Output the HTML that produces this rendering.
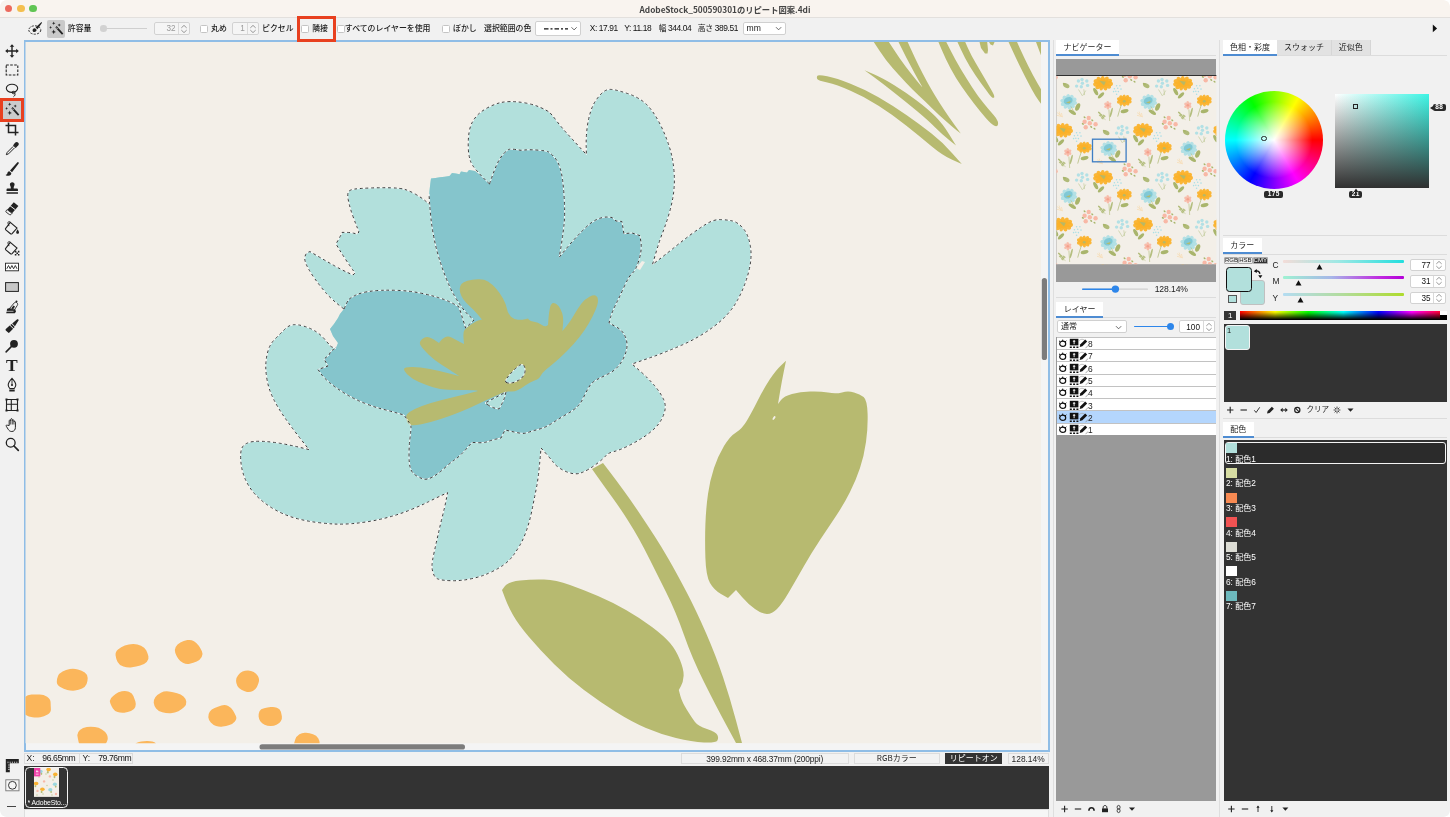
<!DOCTYPE html><html lang="ja"><head><meta charset="utf-8"><title>AdobeStock_500590301のリピート図案.4di</title><style>
*{box-sizing:border-box}
html,body{margin:0;padding:0}
body{width:1450px;height:817px;overflow:hidden;background:#f1f1f1;font-family:"Liberation Sans","Noto Sans CJK JP",sans-serif;font-size:9px;color:#222;position:relative;line-height:1}
.a{position:absolute}
.t{position:absolute;white-space:nowrap;line-height:12px;height:12px}
.jp{font-family:"Noto Sans CJK JP","Liberation Sans",sans-serif}
.box{position:absolute;background:#fff;border:1px solid #d0d0d0;border-radius:2px}
.dbox{position:absolute;background:#f4f4f4;border:1px solid #d4d4d4;border-radius:2px}
.cb{position:absolute;width:8px;height:8px;background:#fff;border:1px solid #c4c4c4;border-radius:1.5px}
.sb{position:absolute;background:#f2f2f2;border:1px solid #dcdcdc;text-align:center;line-height:10px;height:11px;white-space:nowrap}
.tab{position:absolute;background:#fff;border-bottom:2px solid #4e8cd2;text-align:center;white-space:nowrap}
.tabi{position:absolute;background:#e2e2e2;text-align:center;white-space:nowrap;border-right:1px solid #d6d6d6}
.hl{position:absolute;height:1px;background:#dcdcdc}
.lay{position:absolute;left:1056.7px;width:159.6px;height:12.4px;background:#fff;border:1px solid #c2c2c2;border-width:1px 0 0 0}
.pi{position:absolute;left:1226px;width:10.5px;height:10px}
.pl{position:absolute;left:1226px;color:#fff;white-space:nowrap;line-height:11px}
</style></head><body><div id="root" style="position:absolute;left:0;top:0;width:1450px;height:817px;will-change:transform">
<div class="a" style="left:0;top:0;width:1450px;height:17.700px;background:#f9f4ef;border-bottom:1px solid #e3e0dd;border-radius:5px 5px 0 0"></div>
<div class="a" style="left:4.699999999999999px;top:4.7px;width:7.8px;height:7.8px;border-radius:50%;background:#ec6a5e"></div>
<div class="a" style="left:17.1px;top:4.7px;width:7.8px;height:7.8px;border-radius:50%;background:#f4bf4f"></div>
<div class="a" style="left:29.200000000000003px;top:4.7px;width:7.8px;height:7.8px;border-radius:50%;background:#61c554"></div>
<div class="t jp" style="left:525px;width:400px;top:2.5px;text-align:center;font-weight:bold;font-size:8.3px;color:#444">AdobeStock_500590301のリピート図案.4di</div>
<div class="a" style="left:23.5px;top:39.700px;width:1026.3px;height:712.700px;background:#f4f4f4;border:2px solid #8fbde6"></div>
<svg class="a" style="left:0;top:0" width="1450" height="817" viewBox="0 0 1450 817">
<defs><clipPath id="cv"><rect x="25.5" y="42" width="1015.5" height="701.3"/></clipPath></defs>
<g clip-path="url(#cv)"><rect x="25" y="41" width="1017" height="703" fill="#f3efe8"/>
<path d="M817.2 79Q816.5 77.5 817.2 76Q817.9 74.5 827.2 76.3Q836.6 78.2 850.5 83.8Q864.5 89.3 878.5 97.2Q892.4 105.2 906.4 115Q920.4 124.7 931.5 133.6Q942.7 142.4 952.2 153.2L961.8 164L952.2 159.8Q942.7 155.5 931.5 146.2Q920.4 136.8 906.4 125.7Q892.4 114.5 878.5 105.7Q864.5 96.8 850.5 90.8Q836.6 84.7 827.3 82.6Q818 80.5 817.2 79Z" fill="#b7ba70"/>
<path d="M873.8 77L864.5 70.2L873.8 74.2Q883.1 78.2 894.3 85.2Q905.5 92.1 916.6 100.5Q927.8 108.9 935.2 116.3Q942.7 123.8 949.4 134.7L956 145.5L949.4 140.2Q942.7 135 935.2 127.5Q927.8 120.1 916.6 110.8Q905.5 101.5 894.3 92.7Q883.1 83.8 873.8 77Z" fill="#b7ba70"/>
<path d="M880.7 41L873.1 41L879.7 51Q886.2 61 892.8 68.2Q899.3 75.4 905.8 82.6Q912.4 89.8 919 95.7Q925.5 101.6 932 108.2Q938.6 114.7 945.2 120.6Q951.7 126.5 956.2 130L960.8 133.5L955 125.4Q949.1 117.3 943.9 109.4Q938.6 101.6 934.7 95Q930.8 88.5 926.8 81.2Q922.9 74 919 66.2Q915 58.3 911.1 49.6L907.2 41L902.6 41L898 41L902 49Q905.9 57 910.5 65.5Q915 74 918.6 80.5L922.3 87L922 86.8L921.6 86.5L917 81Q912.4 75.4 905.8 66.8Q899.3 58.3 893.8 49.6L888.2 41L880.7 41Z" fill="#b7ba70"/>
<path d="M941.9 41L938 41L941.6 49.6Q945.2 58.3 950.5 68.2Q955.7 78 961.6 86.5Q967.5 95 974 103.5Q980.6 112 985.8 118Q991 123.9 993.6 125.3Q996.3 126.8 997.4 125.7Q998.5 124.5 997.8 121.5Q997 118.6 993.4 114.7Q989.7 110.8 983.9 103.6Q978 96.4 972.1 87.2Q966.2 78 960.3 68.2Q954.4 58.3 950.1 49.6L945.8 41L941.9 41Z" fill="#b7ba70"/>
<path d="M960.9 41L957 41L960.9 49.6Q964.8 58.3 970 66.8Q975.3 75.4 980.5 82.6Q985.8 89.8 989.1 94.2Q992.4 98.5 993.8 97.7Q995.2 96.8 992.5 92Q989.7 87.2 985.2 79.3Q980.6 71.5 976 63.6Q971.4 55.7 968.1 48.4L964.8 41L960.9 41Z" fill="#b7ba70"/>
<path d="M979.3 41 L987.1 41 L988 50 L987.5 53.5 L985 53.5 L981 48Z" fill="#b7ba70"/>
<path d="M988.4 41 L995 41 L993 45.5 L990.5 44.5Z" fill="#b7ba70"/>
<path d="M1012.4 41L1008.1 41L1012.7 51Q1017.3 61 1022.5 71.5Q1027.8 82 1031.7 89.2Q1035.6 96.4 1038.8 100.7L1042 105L1042 98L1042 91L1037.5 83.2Q1033 75.4 1028.4 66.2Q1023.8 57 1020.2 49L1016.6 41L1012.4 41Z" fill="#b7ba70"/>
<path d="M1035.6 41 L1042 41 L1042 58Z" fill="#b7ba70"/>
<path d="M485.8 180.2L489.5 184L481.2 176Q473 168 470.8 162Q468.6 156 468.3 148Q468 140 469 133Q470 126 473 121Q476 116 480 112.8Q484 109.5 489 107Q494 104.5 499 103Q504 101.6 511 101.6Q518 101.6 526 103.1Q534 104.6 540.5 107.5Q547 110.5 549 112Q551 113.5 556.5 120.8Q562 128 568 134.5Q574 141 580.2 147.8L586.4 154.5L586.2 146.2Q586 138 587 129Q588 120 590.5 112Q593 104 597 98.8Q601 93.5 604 91.4Q607 89.3 610.5 89.4Q614 89.6 617.5 90.5Q621 91.4 627.5 93.5Q634 95.6 640 99.3Q646 103 651 109.5Q656 116 660 124Q664 132 667 140Q670 148 671.8 156Q673.6 164 674.2 174Q674.8 184 673.4 194Q672 204 669 214Q666 224 662.5 233Q659 242 655.8 253.2L652.5 264.5L658.4 260Q664.3 255.5 672.6 248.8Q681 242 689.8 235.3Q698.6 228.7 706.3 224Q714 219.3 720.5 219.6Q727 219.8 732.2 220.9Q737.5 222 743 228.2Q748.5 234.5 750.4 246.2Q752.3 257.9 748.6 272Q745 286.2 737.4 300.3Q729.7 314.4 715.2 325.5Q700.6 336.7 682.5 344.8Q664.3 352.8 648.1 358.4L632 364L640 371Q648 378 654 385Q660 392 663.4 399Q666.8 406 663.9 414Q661 422 655.5 427.5Q650 433 643 437.5Q636 442 628 446Q620 450 614 451.5Q608 453 606 455.5Q604 458 599 462Q594 466 589 469Q584 472 580 473.2Q576 474.4 571 473.2Q566 472 561 469Q556 466 553 462Q550 458 545.5 453L541 448L540.5 454Q540 460 539 470Q538 480 536 490Q534 500 532 510Q530 520 527 529Q524 538 520 545Q516 552 512 557Q508 562 502 566Q496 570 488 573.5Q480 577 470 579Q460 581 451 580.7Q442 580.4 438.5 579.2Q435 578 433.5 574Q432 570 432 566Q432 562 434 553Q436 544 438 535Q440 526 442.5 516Q445 506 446.3 499.3L447.6 492.6L441.8 495.3Q436 498 428 502Q420 506 410 510Q400 514 390 516.8Q380 519.6 370 521.3Q360 523 351 523.7Q342 524.4 334 524Q326 523.6 316 522.3Q306 521 296 518.3Q286 515.6 277 510.8Q268 506 261 500Q254 494 249.5 487Q245 480 243 473Q241 466 240.7 459Q240.4 452 241.7 448.5Q243 445 247.5 443Q252 441 261 441.3Q270 441.6 280 443.3Q290 445 299.5 447.3L309 449.6L300.5 438.8Q292 428 285 418Q278 408 273.5 399Q269 390 267.3 381Q265.6 372 265.8 365Q266 358 268 351Q270 344 275 339Q280 334 284.5 329.5Q289 325 293.5 324.7Q298 324.4 304 326.2Q310 328 315 331Q320 334 324 338.5Q328 343 329.5 345Q331 347 333.5 347.5L336 348L337 345.5L338 343L335.5 339.5L333 336L331.5 332.5L330 329L332 326.5L334 324L336 321L338 318L339 316L340 314L342 311.5L344 309L338 304.5Q332 300 326 293Q320 286 315 279Q310 272 307 266Q304 260 305 256.5Q306 253 308 252.3L310 251.6L318 256.3Q326 261 334 265.5Q342 270 347.5 272.5L353 275L354 274L355 273L352.5 269.5Q350 266 346 260Q342 254 339 249L336 244L338.5 239.5Q341 235 341.5 233.7L342 232.4L346 232.4Q350 232.4 353.5 233.2L357 234L358 233L359 232L357 227Q355 222 352.5 215Q350 208 348.5 201Q347 194 348.5 191.8Q350 189.6 355 189Q360 188.4 370 188Q380 187.6 390 187.8Q400 188 405 189.5Q410 191 416 194.5Q422 198 425.5 201L429 204L429 199L429 194L430 186.2L431 178.5L435.5 177.9L440 177.3L444.8 176.7L449.5 176L450.8 174.5L452 173L455.8 173.6L459.5 174.2L460.2 172.9L461 171.6L464 172.1L467 172.6L468 171.3L469 170L472 170.5L475 171L478.5 173.8L482 176.5L485.8 180.2Z" fill="#b2e0dc"/>
<path d="M430 186.2L431 178.5L435.5 177.9L440 177.3L444.8 176.7L449.5 176L450.8 174.5L452 173L455.8 173.6L459.5 174.2L460.2 172.9L461 171.6L464 172.1L467 172.6L468 171.3L469 170L472 170.5L475 171L478.5 173.8L482 176.5L485.8 180.2L489.5 184L492.1 176.5Q494.6 169 497.6 162.9Q500.7 156.9 503.9 153.4Q507 150 509 149.4Q511 148.8 516 149.6L521 150.3L526 149.9Q531 149.5 538.5 150.2Q546 150.8 548 151.7Q550 152.5 554 156.8Q558 161 560.4 169.1Q562.8 177.1 564 195.3Q565.3 213.5 563.9 225.6Q562.5 237.7 560.9 247.4L559.3 257.1L567.3 247.4Q575.4 237.7 583.5 229.6Q591.6 221.5 597.7 219.1Q603.7 216.7 607.9 217.1L612 217.5L614 219.2L616 221L619 221.2L621.9 221.5L622.9 227.6L623.9 233.7L628 233.3L632 233L636 234.3L640 235.7L641 242.8Q642 249.8 639 259.9Q636 270 632.5 273Q629 276 624.5 286Q620 296 616 304Q612 312 610.5 317.5L609 323L615.5 326.5Q622 330 624.5 335Q627 340 627 345Q627 350 624.5 356Q622 362 618 366.5Q614 371 608 374Q602 377 597 379.5Q592 382 589 387Q586 392 583.5 397.5Q581 403 577.5 406.5Q574 410 567 414Q560 418 554 422Q548 426 544 427.5Q540 429 536 430Q532 431 528 432.5Q524 434 519 433Q514 432 509.5 431L505 430L503 434L501 438L496.5 439Q492 440 488 441.5Q484 443 478 442.7L472 442.4L466 449.2Q460 456 455 459.5Q450 463 444 468.5Q438 474 432.5 477Q427 480 423.5 479Q420 478 416 475.5Q412 473 410.5 468.5Q409 464 409 455Q409 446 410 438Q411 430 411 427.5Q411 425 407.5 420L404 415L397 413Q390 411 382 409Q374 407 364 403Q354 399 345 393.5Q336 388 330 383Q324 378 321 373.8L318 369.6L323 367.8L328 366L326 362.5L324 359L326.5 357L329 355L330 353L331 351L333.5 349.5L336 348L337 345.5L338 343L335.5 339.5L333 336L331.5 332.5L330 329L332 326.5L334 324L336 321L338 318L339 316L340 314L342 311.5L344 309L345.5 305.5Q347 302 348.5 300Q350 298 355 295.5Q360 293 367 291.8Q374 290.6 382 290.3Q390 290 400 290.5Q410 291 420 293Q430 295 438 297.5Q446 300 451 302.5Q456 305 457.5 306L459 307L462.3 317.5L465.6 328L469.8 324L474 320L470 316.5Q466 313 462 307.5Q458 302 454 295Q450 288 446 278Q442 268 439 258Q436 248 434 238Q432 228 431 219Q430 210 429.5 202Q429 194 430 186.2Z" fill="#85c5cc"/>
<path d="M636 268 L642 261 L645 262 L640 270Z" fill="#f3efe8"/>
<path d="M459.8 288Q460 286 461.5 284Q463 282 467.5 280.8Q472 279.6 478 279.3Q484 279 488 281.5Q492 284 496 288.5Q500 293 503 298.5Q506 304 507 309Q508 314 511 316.8Q514 319.6 518 319.8Q522 320 525 319.2L528 318.4L529 319.7Q530 321 534 321.7Q538 322.4 541.5 324.7Q545 327 546.5 326L548 325L548.5 318.5Q549 312 550 307.5Q551 303 553.5 303Q556 303 558.5 306Q561 309 562.3 313.5Q563.6 318 563 324.5L562.4 331L566.2 326.5Q570 322 574 315Q578 308 581.5 303.5Q585 299 589.5 296.7Q594 294.4 596 295.7Q598 297 598 300.5Q598 304 595.5 310Q593 316 589 323Q585 330 579.5 337Q574 344 567 351Q560 358 554 363Q548 368 545 370.5Q542 373 540.5 376Q539 379 534.5 380.5Q530 382 526 385Q522 388 518 390Q514 392 510 391.5Q506 391 502 393Q498 395 491 398Q484 401 477 404.5Q470 408 460 412Q450 416 440 419.2Q430 422.4 421.5 424.2Q413 426 410.5 425Q408 424 406.5 419.5Q405 415 409.5 412Q414 409 422 406Q430 403 440 400.5Q450 398 458 396Q466 394 472 392.5L478 391L476.5 390.5Q475 390 465.5 390Q456 390 448 389.8Q440 389.6 433 387.3Q426 385 419 382Q412 379 408 375Q404 371 404 369Q404 367 412 367Q420 367 430 369Q440 371 449.5 373.5L459 376L454.5 373Q450 370 442 365Q434 360 428.5 354.5Q423 349 420.7 345.5Q418.4 342 422.2 339Q426 336 429.5 337.5L433 339L436 341L439 343L440.5 341Q442 339 445 337.3Q448 335.6 452 337.8Q456 340 460 342L464 344L463.5 338Q463 332 464.5 330Q466 328 471 324.5Q476 321 479 320.3L482 319.6L478 314.8Q474 310 470 306.5Q466 303 463.5 299.5Q461 296 460.3 293Q459.6 290 459.8 288Z" fill="#b7ba70"/>
<path d="M507 382.8Q504 382 507 378Q510 374 514 370Q518 366 520.5 364.8Q523 363.6 524.3 366.3Q525.6 369 524.8 372.5Q524 376 521 378.5Q518 381 514 382.3Q510 383.6 507 382.8Z" fill="#b2e0dc"/>
<path d="M488.5 405.3L485 403L495.5 397.5L506 392L505 396Q504 400 501.5 404.5L499 409L495.5 408.3Q492 407.6 488.5 405.3Z" fill="#b2e0dc"/>
<path d="M598 477.5L592 469L597.5 466L603 463L609.5 471.5Q616 480 624 491Q632 502 640 514Q648 526 654.5 536Q661 546 668.5 559Q676 572 686 591Q696 610 706 633Q716 656 723 677Q730 698 736 720.5L742 743L739 743L736 743L726 724.5Q716 706 704 682Q692 658 684 635Q676 612 666 592Q656 572 650 560Q644 548 639 539Q634 530 627 519Q620 508 612 497Q604 486 598 477.5Z" fill="#b7ba70"/>
<path d="M781 365.4L786 360.8L784 370.4Q782 380 780 392L778 404L781 400Q784 396 792 394Q800 392 810 391.6Q820 391.2 828 392.6Q836 394 842 392.4Q848 390.8 854 392.4Q860 394 863.6 397Q867.2 400 867.6 414Q868 428 866 442Q864 456 860 468Q856 480 850 492Q844 504 836 516Q828 528 820 540Q812 552 804 566Q796 580 789 592Q782 604 777 609Q772 614 767 614Q762 614 755 609Q748 604 742 597L736 590L732 594L728 598L721 594Q714 590 710 583Q706 576 705.4 558Q704.8 540 705.4 524Q706 508 708 494Q710 480 714 468Q718 456 724 446Q730 436 736 432.4Q742 428.8 747 420.4Q752 412 758 400Q764 388 770 379Q776 370 781 365.4Z" fill="#b7ba70"/>
<path d="M505 598L502 590L505 586Q508 582 520 580.6Q532 579.2 544 579.6Q556 580 570 585Q584 590 598 596Q612 602 626 610Q640 618 652 627Q664 636 670 643Q676 650 680 660Q684 670 683.6 676Q683.2 682 681 686L678.8 690L680.4 696Q682 702 687 710Q692 718 695 722Q698 726 707 729Q716 732 717.4 735Q718.8 738 717.4 740.4Q716 742.8 704 742.4Q692 742 676 738Q660 734 646 728Q632 722 616 712Q600 702 584 690Q568 678 554 664Q540 650 529 637Q518 624 513 615Q508 606 505 598Z" fill="#b7ba70"/>
<ellipse cx="774" cy="418" rx="1" ry="2.2" transform="rotate(35 774 418)" fill="#f3efe8"/>
<path d="M146.2 650.3Q147.6 653.1 148.4 656.2Q149.2 659.3 146.7 662Q144.1 664.6 140.2 665.6Q136.2 666.7 132 667.3Q127.7 667.9 123.4 666.5Q119.2 665.1 117.6 661.9Q116 658.7 115.6 655.4Q115.1 652.1 118 649.5Q121 646.9 124.8 645.5Q128.7 644.2 133 644Q137.4 643.9 141 645.7Q144.7 647.4 146.2 650.3Z" fill="#fbb65b"/>
<path d="M198.8 645.7Q200.5 648.2 201.9 651.2Q203.4 654.1 201.7 657.1Q200 660.1 196.7 661.6Q193.4 663.1 189.7 663.8Q186.1 664.5 182.9 662.7Q179.8 661 178.1 658.4Q176.4 655.9 175.3 652.9Q174.2 650 175.7 647Q177.1 644 180.4 642.4Q183.6 640.9 187.3 640.1Q191 639.4 194 641.3Q197 643.2 198.8 645.7Z" fill="#fbb65b"/>
<path d="M87.7 678Q87.7 681.1 86.6 684Q85.5 686.8 82.1 688.5Q78.8 690.2 74.9 690.6Q71 690.9 67.3 690Q63.6 689 60.3 687.1Q56.9 685.2 56.8 682Q56.7 678.9 58 676Q59.2 673.1 62.6 671.4Q65.9 669.6 69.9 669Q73.9 668.4 77.9 669.4Q81.8 670.3 84.8 672.6Q87.8 674.9 87.7 678Z" fill="#fbb65b"/>
<path d="M258.9 681.5Q258.3 684.4 256.9 687Q255.5 689.6 252.8 691.1Q250 692.6 247 691.9Q244 691.2 241.4 689.8Q238.9 688.4 237.4 685.9Q235.9 683.3 236.1 680.4Q236.2 677.5 238.1 675.2Q239.9 672.9 242.5 671.6Q245.1 670.3 248.1 670.4Q251.1 670.5 253.7 672Q256.3 673.5 257.9 676Q259.5 678.6 258.9 681.5Z" fill="#fbb65b"/>
<path d="M50.6 702.3Q50.7 705.7 50.9 709.1Q51.1 712.6 47.6 714.5Q44 716.5 40.2 717.2Q36.4 717.8 32.5 717.3Q28.7 716.8 25.4 714.8Q22.1 712.8 21.8 709.6Q21.5 706.3 21.8 703.1Q22.2 700 24.8 697.3Q27.3 694.7 31.5 694.5Q35.6 694.3 39.7 694.5Q43.7 694.6 47.1 696.8Q50.5 698.9 50.6 702.3Z" fill="#fbb65b"/>
<path d="M133.4 695.9Q134.5 698.8 135.4 701.4Q136.3 704 135.3 706.9Q134.2 709.7 131 711.1Q127.7 712.4 124.3 712.7Q120.8 713.1 117.6 712Q114.4 710.9 112.9 708.4Q111.3 705.9 110.3 703.2Q109.3 700.5 111.1 698Q112.9 695.6 115.6 693.9Q118.2 692.1 121.8 691.3Q125.4 690.5 128.9 691.7Q132.4 693 133.4 695.9Z" fill="#fbb65b"/>
<path d="M186.3 701.8Q186.6 704.7 184.2 707.1Q181.8 709.5 178.4 711.2Q175.1 712.9 170.7 713.2Q166.4 713.4 162.3 712.3Q158.1 711.1 156.1 708.4Q154 705.8 153.7 702.8Q153.5 699.9 155.3 697.2Q157.2 694.5 160.9 692.7Q164.5 690.9 168.9 691.5Q173.3 692.1 177.1 693.2Q180.9 694.2 183.5 696.5Q186.1 698.8 186.3 701.8Z" fill="#fbb65b"/>
<path d="M233 710.4Q234.6 713 235.9 716Q237.2 718.9 234.9 721.4Q232.7 724 229.4 725Q226.1 726.1 222.7 726.6Q219.4 727.2 216.1 726Q212.9 724.9 210.8 722.5Q208.6 720.2 208.3 717.2Q208 714.3 209.7 711.7Q211.4 709.1 214.6 707.9Q217.8 706.8 221.4 705.6Q225 704.3 228.2 706.1Q231.5 707.8 233 710.4Z" fill="#fbb65b"/>
<path d="M280.8 711.5Q281.5 714.1 281.9 716.6Q282.3 719 280.8 721.2Q279.3 723.5 276.5 724.8Q273.8 726.1 270.5 726Q267.3 726 264.6 724.7Q261.9 723.4 260.3 721.2Q258.8 719 258.6 716.5Q258.4 713.9 259.5 711.3Q260.6 708.7 264.1 708.2Q267.5 707.7 270.7 707.1Q273.8 706.5 276.9 707.7Q280 708.9 280.8 711.5Z" fill="#fbb65b"/>
<path d="M106.6 734.1Q108.3 737 107.5 740.1Q106.8 743.2 103.9 745.5Q101.1 747.8 97.3 748.5Q93.5 749.3 89.7 748.9Q85.9 748.4 82.6 746.7Q79.3 744.9 78.6 741.9Q77.9 738.9 77.4 735.7Q77 732.5 79.9 729.9Q82.7 727.4 86.9 727Q91.1 726.5 94.9 727.1Q98.7 727.6 101.9 729.4Q105 731.2 106.6 734.1Z" fill="#fbb65b"/>
<path d="M155.5 743Q156.1 744.1 156.4 745.1Q156.7 746.2 155.6 747.2Q154.5 748.3 151.6 748.5Q148.7 748.7 146 748.7Q143.4 748.8 140.6 748.5Q137.8 748.1 137 747Q136.2 745.9 135.6 744.8Q135 743.7 136.9 742.8Q138.8 741.9 141.3 741.4Q143.9 740.9 146.8 740.9Q149.7 740.8 152.3 741.4Q154.9 742 155.5 743Z" fill="#fbb65b"/>
<path d="M319.6 744.4Q319.3 747.6 317.8 750.4Q316.3 753.2 313.5 754.9Q310.7 756.7 307.2 757Q303.7 757.3 300.3 756.1Q296.8 754.9 294.8 752Q292.7 749 293.5 745.7Q294.4 742.4 295.3 739.3Q296.3 736.2 299.4 734.2Q302.4 732.3 306 732.7Q309.6 733.1 313 734.2Q316.5 735.2 318.2 738.2Q320 741.2 319.6 744.4Z" fill="#fbb65b"/>
<path d="M489.5 184Q473 168 470.8 162Q468.6 156 468.3 148Q468 140 469 133Q470 126 473 121Q476 116 480 112.8Q484 109.5 489 107Q494 104.5 499 103Q504 101.6 511 101.6Q518 101.6 526 103.1Q534 104.6 540.5 107.5Q547 110.5 549 112Q551 113.5 556.5 120.8Q562 128 568 134.5Q574 141 580.2 147.8L586.4 154.5L586.2 146.2Q586 138 587 129Q588 120 590.5 112Q593 104 597 98.8Q601 93.5 604 91.4Q607 89.3 610.5 89.4Q614 89.6 617.5 90.5Q621 91.4 627.5 93.5Q634 95.6 640 99.3Q646 103 651 109.5Q656 116 660 124Q664 132 667 140Q670 148 671.8 156Q673.6 164 674.2 174Q674.8 184 673.4 194Q672 204 669 214Q666 224 662.5 233Q659 242 655.8 253.2L652.5 264.5L658.4 260Q664.3 255.5 672.6 248.8Q681 242 689.8 235.3Q698.6 228.7 706.3 224Q714 219.3 720.5 219.6Q727 219.8 732.2 220.9Q737.5 222 743 228.2Q748.5 234.5 750.4 246.2Q752.3 257.9 748.6 272Q745 286.2 737.4 300.3Q729.7 314.4 715.2 325.5Q700.6 336.7 682.5 344.8Q664.3 352.8 648.1 358.4L632 364L640 371Q648 378 654 385Q660 392 663.4 399Q666.8 406 663.9 414Q661 422 655.5 427.5Q650 433 643 437.5Q636 442 628 446Q620 450 614 451.5Q608 453 606 455.5Q604 458 599 462Q594 466 589 469Q584 472 580 473.2Q576 474.4 571 473.2Q566 472 561 469Q556 466 553 462Q550 458 545.5 453L541 448L540.5 454Q540 460 539 470Q538 480 536 490Q534 500 532 510Q530 520 527 529Q524 538 520 545Q516 552 512 557Q508 562 502 566Q496 570 488 573.5Q480 577 470 579Q460 581 451 580.7Q442 580.4 438.5 579.2Q435 578 433.5 574Q432 570 432 566Q432 562 434 553Q436 544 438 535Q440 526 442.5 516Q445 506 446.3 499.3L447.6 492.6L441.8 495.3Q436 498 428 502Q420 506 410 510Q400 514 390 516.8Q380 519.6 370 521.3Q360 523 351 523.7Q342 524.4 334 524Q326 523.6 316 522.3Q306 521 296 518.3Q286 515.6 277 510.8Q268 506 261 500Q254 494 249.5 487Q245 480 243 473Q241 466 240.7 459Q240.4 452 241.7 448.5Q243 445 247.5 443Q252 441 261 441.3Q270 441.6 280 443.3Q290 445 299.5 447.3L309 449.6L300.5 438.8Q292 428 285 418Q278 408 273.5 399Q269 390 267.3 381Q265.6 372 265.8 365Q266 358 268 351Q270 344 275 339Q280 334 284.5 329.5Q289 325 293.5 324.7Q298 324.4 304 326.2Q310 328 315 331Q320 334 324 338.5Q328 343 329.5 345Q331 347 333.5 347.5L336 348" fill="none" stroke="#fff" stroke-width="1" opacity=".85"/>
<path d="M489.5 184Q473 168 470.8 162Q468.6 156 468.3 148Q468 140 469 133Q470 126 473 121Q476 116 480 112.8Q484 109.5 489 107Q494 104.5 499 103Q504 101.6 511 101.6Q518 101.6 526 103.1Q534 104.6 540.5 107.5Q547 110.5 549 112Q551 113.5 556.5 120.8Q562 128 568 134.5Q574 141 580.2 147.8L586.4 154.5L586.2 146.2Q586 138 587 129Q588 120 590.5 112Q593 104 597 98.8Q601 93.5 604 91.4Q607 89.3 610.5 89.4Q614 89.6 617.5 90.5Q621 91.4 627.5 93.5Q634 95.6 640 99.3Q646 103 651 109.5Q656 116 660 124Q664 132 667 140Q670 148 671.8 156Q673.6 164 674.2 174Q674.8 184 673.4 194Q672 204 669 214Q666 224 662.5 233Q659 242 655.8 253.2L652.5 264.5L658.4 260Q664.3 255.5 672.6 248.8Q681 242 689.8 235.3Q698.6 228.7 706.3 224Q714 219.3 720.5 219.6Q727 219.8 732.2 220.9Q737.5 222 743 228.2Q748.5 234.5 750.4 246.2Q752.3 257.9 748.6 272Q745 286.2 737.4 300.3Q729.7 314.4 715.2 325.5Q700.6 336.7 682.5 344.8Q664.3 352.8 648.1 358.4L632 364L640 371Q648 378 654 385Q660 392 663.4 399Q666.8 406 663.9 414Q661 422 655.5 427.5Q650 433 643 437.5Q636 442 628 446Q620 450 614 451.5Q608 453 606 455.5Q604 458 599 462Q594 466 589 469Q584 472 580 473.2Q576 474.4 571 473.2Q566 472 561 469Q556 466 553 462Q550 458 545.5 453L541 448L540.5 454Q540 460 539 470Q538 480 536 490Q534 500 532 510Q530 520 527 529Q524 538 520 545Q516 552 512 557Q508 562 502 566Q496 570 488 573.5Q480 577 470 579Q460 581 451 580.7Q442 580.4 438.5 579.2Q435 578 433.5 574Q432 570 432 566Q432 562 434 553Q436 544 438 535Q440 526 442.5 516Q445 506 446.3 499.3L447.6 492.6L441.8 495.3Q436 498 428 502Q420 506 410 510Q400 514 390 516.8Q380 519.6 370 521.3Q360 523 351 523.7Q342 524.4 334 524Q326 523.6 316 522.3Q306 521 296 518.3Q286 515.6 277 510.8Q268 506 261 500Q254 494 249.5 487Q245 480 243 473Q241 466 240.7 459Q240.4 452 241.7 448.5Q243 445 247.5 443Q252 441 261 441.3Q270 441.6 280 443.3Q290 445 299.5 447.3L309 449.6L300.5 438.8Q292 428 285 418Q278 408 273.5 399Q269 390 267.3 381Q265.6 372 265.8 365Q266 358 268 351Q270 344 275 339Q280 334 284.5 329.5Q289 325 293.5 324.7Q298 324.4 304 326.2Q310 328 315 331Q320 334 324 338.5Q328 343 329.5 345Q331 347 333.5 347.5L336 348" fill="none" stroke="#3c3c3c" stroke-width="1" stroke-dasharray="2.8 2.8"/>
<path d="M344 309Q332 300 326 293Q320 286 315 279Q310 272 307 266Q304 260 305 256.5Q306 253 308 252.3L310 251.6L318 256.3Q326 261 334 265.5Q342 270 347.5 272.5L353 275L354 274L355 273L352.5 269.5Q350 266 346 260Q342 254 339 249L336 244L338.5 239.5Q341 235 341.5 233.7L342 232.4L346 232.4Q350 232.4 353.5 233.2L357 234L358 233L359 232L357 227Q355 222 352.5 215Q350 208 348.5 201Q347 194 348.5 191.8Q350 189.6 355 189Q360 188.4 370 188Q380 187.6 390 187.8Q400 188 405 189.5Q410 191 416 194.5Q422 198 425.5 201L429 204" fill="none" stroke="#fff" stroke-width="1" opacity=".85"/>
<path d="M344 309Q332 300 326 293Q320 286 315 279Q310 272 307 266Q304 260 305 256.5Q306 253 308 252.3L310 251.6L318 256.3Q326 261 334 265.5Q342 270 347.5 272.5L353 275L354 274L355 273L352.5 269.5Q350 266 346 260Q342 254 339 249L336 244L338.5 239.5Q341 235 341.5 233.7L342 232.4L346 232.4Q350 232.4 353.5 233.2L357 234L358 233L359 232L357 227Q355 222 352.5 215Q350 208 348.5 201Q347 194 348.5 191.8Q350 189.6 355 189Q360 188.4 370 188Q380 187.6 390 187.8Q400 188 405 189.5Q410 191 416 194.5Q422 198 425.5 201L429 204" fill="none" stroke="#3c3c3c" stroke-width="1" stroke-dasharray="2.8 2.8"/>
<path d="M489.5 184Q494.6 169 497.6 162.9Q500.7 156.9 503.9 153.4Q507 150 509 149.4Q511 148.8 516 149.6L521 150.3L526 149.9Q531 149.5 538.5 150.2Q546 150.8 548 151.7Q550 152.5 554 156.8Q558 161 560.4 169.1Q562.8 177.1 564 195.3Q565.3 213.5 563.9 225.6Q562.5 237.7 560.9 247.4L559.3 257.1L567.3 247.4Q575.4 237.7 583.5 229.6Q591.6 221.5 597.7 219.1Q603.7 216.7 607.9 217.1L612 217.5L614 219.2L616 221L619 221.2L621.9 221.5L622.9 227.6L623.9 233.7L628 233.3L632 233L636 234.3L640 235.7L641 242.8Q642 249.8 639 259.9Q636 270 632.5 273Q629 276 624.5 286Q620 296 616 304Q612 312 610.5 317.5L609 323L615.5 326.5Q622 330 624.5 335Q627 340 627 345Q627 350 624.5 356Q622 362 618 366.5Q614 371 608 374Q602 377 597 379.5Q592 382 589 387Q586 392 583.5 397.5Q581 403 577.5 406.5Q574 410 567 414Q560 418 554 422Q548 426 544 427.5Q540 429 536 430Q532 431 528 432.5Q524 434 519 433Q514 432 509.5 431L505 430L503 434L501 438L496.5 439Q492 440 488 441.5Q484 443 478 442.7L472 442.4L466 449.2Q460 456 455 459.5Q450 463 444 468.5Q438 474 432.5 477Q427 480 423.5 479Q420 478 416 475.5Q412 473 410.5 468.5Q409 464 409 455Q409 446 410 438Q411 430 411 427.5Q411 425 407.5 420L404 415L397 413Q390 411 382 409Q374 407 364 403Q354 399 345 393.5Q336 388 330 383Q324 378 321 373.8L318 369.6L323 367.8L328 366L326 362.5L324 359L326.5 357L329 355L330 353L331 351L333.5 349.5L336 348" fill="none" stroke="#fff" stroke-width="1" opacity=".85"/>
<path d="M489.5 184Q494.6 169 497.6 162.9Q500.7 156.9 503.9 153.4Q507 150 509 149.4Q511 148.8 516 149.6L521 150.3L526 149.9Q531 149.5 538.5 150.2Q546 150.8 548 151.7Q550 152.5 554 156.8Q558 161 560.4 169.1Q562.8 177.1 564 195.3Q565.3 213.5 563.9 225.6Q562.5 237.7 560.9 247.4L559.3 257.1L567.3 247.4Q575.4 237.7 583.5 229.6Q591.6 221.5 597.7 219.1Q603.7 216.7 607.9 217.1L612 217.5L614 219.2L616 221L619 221.2L621.9 221.5L622.9 227.6L623.9 233.7L628 233.3L632 233L636 234.3L640 235.7L641 242.8Q642 249.8 639 259.9Q636 270 632.5 273Q629 276 624.5 286Q620 296 616 304Q612 312 610.5 317.5L609 323L615.5 326.5Q622 330 624.5 335Q627 340 627 345Q627 350 624.5 356Q622 362 618 366.5Q614 371 608 374Q602 377 597 379.5Q592 382 589 387Q586 392 583.5 397.5Q581 403 577.5 406.5Q574 410 567 414Q560 418 554 422Q548 426 544 427.5Q540 429 536 430Q532 431 528 432.5Q524 434 519 433Q514 432 509.5 431L505 430L503 434L501 438L496.5 439Q492 440 488 441.5Q484 443 478 442.7L472 442.4L466 449.2Q460 456 455 459.5Q450 463 444 468.5Q438 474 432.5 477Q427 480 423.5 479Q420 478 416 475.5Q412 473 410.5 468.5Q409 464 409 455Q409 446 410 438Q411 430 411 427.5Q411 425 407.5 420L404 415L397 413Q390 411 382 409Q374 407 364 403Q354 399 345 393.5Q336 388 330 383Q324 378 321 373.8L318 369.6L323 367.8L328 366L326 362.5L324 359L326.5 357L329 355L330 353L331 351L333.5 349.5L336 348" fill="none" stroke="#3c3c3c" stroke-width="1" stroke-dasharray="2.8 2.8"/>
<path d="M344 309Q347 302 348.5 300Q350 298 355 295.5Q360 293 367 291.8Q374 290.6 382 290.3Q390 290 400 290.5Q410 291 420 293Q430 295 438 297.5Q446 300 451 302.5Q456 305 457.5 306L459 307L462.3 317.5L465.6 328L469.8 324L474 320L470 316.5Q466 313 462 307.5Q458 302 454 295Q450 288 446 278Q442 268 439 258Q436 248 434 238Q432 228 431 219Q430 210 429.5 202L429 194" fill="none" stroke="#fff" stroke-width="1" opacity=".85"/>
<path d="M344 309Q347 302 348.5 300Q350 298 355 295.5Q360 293 367 291.8Q374 290.6 382 290.3Q390 290 400 290.5Q410 291 420 293Q430 295 438 297.5Q446 300 451 302.5Q456 305 457.5 306L459 307L462.3 317.5L465.6 328L469.8 324L474 320L470 316.5Q466 313 462 307.5Q458 302 454 295Q450 288 446 278Q442 268 439 258Q436 248 434 238Q432 228 431 219Q430 210 429.5 202L429 194" fill="none" stroke="#3c3c3c" stroke-width="1" stroke-dasharray="2.8 2.8"/>
<path d="M507 382.8Q504 382 507 378Q510 374 514 370Q518 366 520.5 364.8Q523 363.6 524.3 366.3Q525.6 369 524.8 372.5Q524 376 521 378.5Q518 381 514 382.3Q510 383.6 507 382.8Z" fill="none" stroke="#fff" stroke-width="1" opacity=".85"/>
<path d="M507 382.8Q504 382 507 378Q510 374 514 370Q518 366 520.5 364.8Q523 363.6 524.3 366.3Q525.6 369 524.8 372.5Q524 376 521 378.5Q518 381 514 382.3Q510 383.6 507 382.8Z" fill="none" stroke="#3c3c3c" stroke-width="1" stroke-dasharray="2.8 2.8"/>
<path d="M488.5 405.3L485 403L495.5 397.5L506 392L505 396Q504 400 501.5 404.5L499 409L495.5 408.3Q492 407.6 488.5 405.3Z" fill="none" stroke="#fff" stroke-width="1" opacity=".85"/>
<path d="M488.5 405.3L485 403L495.5 397.5L506 392L505 396Q504 400 501.5 404.5L499 409L495.5 408.3Q492 407.6 488.5 405.3Z" fill="none" stroke="#3c3c3c" stroke-width="1" stroke-dasharray="2.8 2.8"/>
</g>
<rect x="259.5" y="744.3" width="205.5" height="5.2" rx="2.6" fill="#7c7c7c"/>
<rect x="1041.8" y="278" width="5.2" height="82" rx="2.6" fill="#7c7c7c"/>
</svg>
<svg class="a" style="left:27px;top:19px" width="18" height="18" viewBox="0 0 18 18"><ellipse cx="7.8" cy="11" rx="6" ry="4.2" fill="none" stroke="#222" stroke-width="0.9" stroke-dasharray="2.2 1.2"/><path d="M5.6 11.6c-.2-1.6 1-2.6 2.4-2.3l1.6 1.5c.1 1.5-1.3 2.6-3.1 2.1-.6-.2-.9-.7-.9-1.300z" fill="#222"/><path d="M8.6 8.600l5.600-5.300c.5-.4 1 .1.700.7l-4.400 6.300z" fill="#222"/></svg>
<div class="a" style="left:47px;top:20px;width:18px;height:17.7px;background:#c9c9c9;border-radius:2px"></div>
<svg class="a" style="left:47px;top:20px" width="18" height="18" viewBox="0 0 18 18"><path d="M8.300 7.400l1.300-1.300 6.700 7.300-1.300 1.300z" fill="#222"/><path d="M9.300 7.600l1.200 1.300" stroke="#e8e8e8" stroke-width=".9"/><path d="M6.7 9.600000000000001L7.344 11.256L9.0 11.9L7.344 12.544L6.7 14.2L6.056 12.544L4.4 11.9L6.056 11.256ZM6.7 1.5999999999999999L7.176 2.824L8.4 3.3L7.176 3.776L6.7 5.0L6.224 3.776L5.0 3.3L6.224 2.824ZM3.6 5.9L4.0200000000000005 6.98L5.1 7.4L4.0200000000000005 7.82L3.6 8.9L3.18 7.82L2.1 7.4L3.18 6.98ZM12.2 3.3999999999999995L12.676 4.624L13.899999999999999 5.1L12.676 5.576L12.2 6.8L11.723999999999998 5.576L10.5 5.1L11.723999999999998 4.624Z" fill="#222"/></svg>
<div class="t jp" style="left:67.8px;top:22.2px;font-weight:500;font-size:7.9px;">許容量</div>
<div class="a" style="left:104px;top:28px;width:42.5px;height:1px;background:#cfcfcf"></div>
<div class="a" style="left:100.3px;top:25.3px;width:6.4px;height:6.4px;border-radius:50%;background:#d2d2d2"></div>
<div class="a" style="left:154px;top:22px;width:36.3px;height:13.3px;background:#f5f5f5;border:1px solid #d2d2d2;border-radius:2px"></div><div class="a" style="left:178.0px;top:23px;width:1px;height:11.3px;background:#dadada"></div><div class="t" style="left:154px;top:23.45px;width:21.499999999999996px;text-align:right;color:#9a9a9a;font-size:8.2px">32</div><svg class="a" style="left:180.15px;top:23.65px" width="8" height="10" viewBox="0 0 8 10"><path d="M1.300 3.900l2.700-2.500 2.700 2.500M1.300 6.100l2.700 2.500 2.700-2.500" fill="none" stroke="#777" stroke-width="0.75"/></svg>
<div class="cb" style="left:200.3px;top:24.6px"></div>
<div class="t jp" style="left:211px;top:22.2px;font-weight:500;font-size:7.9px;">丸め</div>
<div class="a" style="left:232.3px;top:22px;width:27px;height:13.3px;background:#f5f5f5;border:1px solid #d2d2d2;border-radius:2px"></div><div class="a" style="left:247.3px;top:23px;width:1px;height:11.3px;background:#dadada"></div><div class="t" style="left:232.3px;top:23.45px;width:12.5px;text-align:right;color:#9a9a9a;font-size:8.2px">1</div><svg class="a" style="left:249.3px;top:23.65px" width="8" height="10" viewBox="0 0 8 10"><path d="M1.300 3.900l2.700-2.500 2.700 2.500M1.300 6.100l2.700 2.500 2.700-2.500" fill="none" stroke="#777" stroke-width="0.75"/></svg>
<div class="t jp" style="left:262px;top:22.2px;font-weight:500;font-size:7.9px;">ピクセル</div>
<div class="a" style="left:297px;top:15.600px;width:38.900px;height:26.200px;border:3.500px solid #e8401f;background:#f1f1f1"></div>
<div class="cb" style="left:301.3px;top:24.6px"></div>
<div class="t jp" style="left:312.2px;top:22.2px;font-weight:500;font-size:7.9px;">隣接</div>
<div class="cb" style="left:337.2px;top:24.6px"></div>
<div class="t jp" style="left:344.8px;top:22.2px;font-weight:500;font-size:7.9px;">すべてのレイヤーを使用</div>
<div class="cb" style="left:442px;top:24.6px"></div>
<div class="t jp" style="left:453px;top:22.2px;font-weight:500;font-size:7.9px;">ぼかし</div>
<div class="t jp" style="left:484px;top:22.2px;font-weight:500;font-size:7.9px;">選択範囲の色</div>
<div class="box" style="left:534.6px;top:20.8px;width:46.2px;height:15.6px"></div>
<svg class="a" style="left:534.6px;top:20.8px" width="47" height="16" viewBox="0 0 47 16"><path d="M9 7.800h4.500M15.500 7.800h2M19.500 7.800h4.500M26 7.800h2M30 7.800h3" stroke="#111" stroke-width="1.3"/><path d="M36.500 6.300l2.600 2.600 2.600-2.600" fill="none" stroke="#444" stroke-width="0.8"/></svg>
<div class="t" style="left:589.8px;top:22.2px;font-size:8.4px;letter-spacing:-0.4px;color:#111;">X: 17.91</div>
<div class="t" style="left:624.3px;top:22.2px;font-size:8.4px;letter-spacing:-0.4px;color:#111;">Y: 11.18</div>
<div class="t" style="left:658.6px;top:22.2px;font-size:8.4px;letter-spacing:-0.4px;color:#111;"><span class="jp" style="font-size:7.9px">幅</span> 344.04</div>
<div class="t" style="left:697.8px;top:22.2px;font-size:8.4px;letter-spacing:-0.4px;color:#111;"><span class="jp" style="font-size:7.9px">高さ</span> 389.51</div>
<div class="box" style="left:742.6px;top:21.5px;width:43.6px;height:13.6px"></div>
<div class="t" style="left:746.5px;top:22.2px;font-size:8.6px;">mm</div>
<svg class="a" style="left:774px;top:24px" width="10" height="9" viewBox="0 0 10 9"><path d="M2 3.200l2.600 2.600 2.600-2.600" fill="none" stroke="#444" stroke-width="0.8"/></svg>
<svg class="a" style="left:1430px;top:23px" width="10" height="11" viewBox="0 0 10 11"><path d="M2.800 1.600l4.300 3.800-4.300 3.800z" fill="#111"/></svg>
<svg class="a" style="left:3.8000000000000007px;top:42.8px" width="16" height="16" viewBox="0 0 16 16"><path d="M8 1.200l2.300 2.600h-1.600v3.500h3.500v-1.600l2.600 2.300-2.600 2.300v-1.600h-3.500v3.500h1.600l-2.300 2.600-2.300-2.600h1.600v-3.500h-3.500v1.600l-2.600-2.300 2.600-2.300v1.600h3.500v-3.500h-1.600z" fill="#222"/></svg>
<svg class="a" style="left:3.8000000000000007px;top:62.47px" width="16" height="16" viewBox="0 0 16 16"><rect x="2.200" y="3" width="11.600" height="10" fill="none" stroke="#222" stroke-width="1.100" stroke-dasharray="2.600 1.400"/></svg>
<svg class="a" style="left:3.8000000000000007px;top:82.14px" width="16" height="16" viewBox="0 0 16 16"><ellipse cx="8" cy="6.300" rx="5.700" ry="4.100" fill="none" stroke="#222" stroke-width="1.100"/><path d="M7.500 10.300c1.600-1.800 4.200-.9 3.300.9-.6 1.100-2.600.6-3.300-.9zM10.800 11.200c.6 1.300.2 2.600-1.400 3.600" fill="none" stroke="#222" stroke-width="1"/></svg>
<div class="a" style="left:-.2px;top:98px;width:24.200px;height:24.100px;background:#cbcbcb;border:3px solid #e8401f"></div>
<svg class="a" style="left:2.7px;top:100.8px" width="18" height="18" viewBox="0 0 18 18"><path d="M8.300 7.400l1.300-1.300 6.700 7.300-1.300 1.300z" fill="#222"/><path d="M9.300 7.600l1.200 1.300" stroke="#e8e8e8" stroke-width=".9"/><path d="M6.7 9.600000000000001L7.344 11.256L9.0 11.9L7.344 12.544L6.7 14.2L6.056 12.544L4.4 11.9L6.056 11.256ZM6.7 1.5999999999999999L7.176 2.824L8.4 3.3L7.176 3.776L6.7 5.0L6.224 3.776L5.0 3.3L6.224 2.824ZM3.6 5.9L4.0200000000000005 6.98L5.1 7.4L4.0200000000000005 7.82L3.6 8.9L3.18 7.82L2.1 7.4L3.18 6.98ZM12.2 3.3999999999999995L12.676 4.624L13.899999999999999 5.1L12.676 5.576L12.2 6.8L11.723999999999998 5.576L10.5 5.1L11.723999999999998 4.624Z" fill="#222"/></svg>
<svg class="a" style="left:3.8000000000000007px;top:121.48000000000002px" width="16" height="16" viewBox="0 0 16 16"><path d="M4.500 1.500v10h10M1.500 4.500h10v10" fill="none" stroke="#222" stroke-width="1.500"/></svg>
<svg class="a" style="left:3.8000000000000007px;top:141.15px" width="16" height="16" viewBox="0 0 16 16"><path d="M10 3.400l2.600 2.600-1 1-2.600-2.600z" fill="#222"/><path d="M11.300 1.600c1-1 2.300-.6 2.900.1.700.7.900 1.900 0 2.800l-1.800 1.700-2.800-2.800z" fill="#222"/><path d="M9.200 5.400l-6 6-.9 2.300 2.300-.9 6-6" fill="none" stroke="#222" stroke-width="1"/></svg>
<svg class="a" style="left:3.8000000000000007px;top:160.82px" width="16" height="16" viewBox="0 0 16 16"><path d="M14.300 1.200c.6.300.6 1 .2 1.600l-6.500 8.400-2-1.700 7.200-7.900c.3-.4.700-.6 1.100-.4z" fill="#222"/><path d="M5.300 10.200l2 1.700c.2 1.500-1 2.800-2.800 2.900-1.300.1-2.300-.3-2.900-.9 1.300-.2 1.600-.8 1.800-1.800.2-1.100.9-1.800 1.900-1.900z" fill="#222"/></svg>
<svg class="a" style="left:4.550000000000001px;top:181.24px" width="14.5" height="14.5" viewBox="0 0 16 16"><path d="M8 1.500c1.600 0 2.600 1.100 2.600 2.400 0 1.400-1 2-1 3.400v.9h3.600c.7 0 1.100.4 1.100 1.100v1.700h-12.600v-1.700c0-.7.400-1.100 1.100-1.100h3.600v-.9c0-1.400-1-2-1-3.400 0-1.300 1-2.400 2.600-2.400zM1.700 12.300h12.600v1.700h-12.600z" fill="#222"/></svg>
<svg class="a" style="left:3.8000000000000007px;top:200.16000000000003px" width="16" height="16" viewBox="0 0 16 16"><path d="M9.800 2.300l4.600 3.800-6.300 7.200-4.900-3.600z" fill="#222"/><path d="M6 5.700l5.100 3.900" stroke="#f0f0f0" stroke-width="1"/><path d="M3.200 9.700l4.900 3.600-1 1.100c-.5.500-1.200.5-1.800.1l-3.100-2.300c-.5-.4-.5-1-.1-1.500z" fill="#f0f0f0" stroke="#222" stroke-width=".9"/></svg>
<svg class="a" style="left:3.8000000000000007px;top:219.83000000000004px" width="16" height="16" viewBox="0 0 16 16"><path d="M6.300 2.300l6.700 5.700-4.900 5.600c-.5.500-1.100.5-1.600.1l-4.700-3.900c-.5-.4-.5-1-.1-1.500z" fill="none" stroke="#222" stroke-width="1.100"/><path d="M6.300 2.300c-1.200-1.300-2.800-.6-2.200 1.300l.9 2.500" fill="none" stroke="#222" stroke-width="1"/><path d="M13.600 9.200c.8 1.500 1.400 2.400 1.400 3.200 0 .8-.6 1.400-1.400 1.400-.8 0-1.400-.6-1.400-1.400 0-.8.600-1.700 1.400-3.200z" fill="#222"/></svg>
<svg class="a" style="left:3.8000000000000007px;top:239.5px" width="16" height="16" viewBox="0 0 16 16"><path d="M6.300 2.300l6.700 5.700-4.900 5.600c-.5.500-1.100.5-1.600.1l-4.700-3.900c-.5-.4-.5-1-.1-1.500z" fill="none" stroke="#222" stroke-width="1.100"/><path d="M6.300 2.300c-1.200-1.300-2.800-.6-2.200 1.300l.9 2.500" fill="none" stroke="#222" stroke-width="1"/><path d="M10.800 10.800h1.600v1.600h-1.600zM12.400 12.400h1.600v1.600h-1.600zM13.900 10.800h1.500v1.600h-1.500zM10.800 14h1.600v1.500h-1.600zM13.900 14h1.500v1.500h-1.500z" fill="#222"/></svg>
<svg class="a" style="left:3.8000000000000007px;top:259.17px" width="16" height="16" viewBox="0 0 16 16"><rect x="1.500" y="4.200" width="13" height="7.600" fill="#fff" stroke="#222" stroke-width=".9"/><path d="M2.800 9.800l1.700-3.300 1.700 3.300 1.700-3.300 1.700 3.300 1.700-3.300 1.700 3.300" fill="none" stroke="#222" stroke-width=".9"/></svg>
<svg class="a" style="left:3.8000000000000007px;top:278.84000000000003px" width="16" height="16" viewBox="0 0 16 16"><rect x="1.600" y="3.600" width="12.800" height="8.800" fill="#c8c8c8" stroke="#222" stroke-width="1"/></svg>
<svg class="a" style="left:3.8000000000000007px;top:298.51000000000005px" width="16" height="16" viewBox="0 0 16 16"><path d="M2.200 14.200l1-4.400 7.100-2 1.700 4.700-1.200 1.700z" fill="#222"/><path d="M5.500 9.500l4.800-5.700c.7-.6 1.500-.8 2.400-.2 1 .7 1.300 1.800.6 2.800l-3 4.600z" fill="#f0f0f0" stroke="#222" stroke-width=".9"/><path d="M7.200 9.300l2.300-2.800 1.500 1-1.900 3z" fill="#222"/><circle cx="12.500" cy="2.600" r="1" fill="#222"/><path d="M1.500 12.300h8" stroke="#f0f0f0" stroke-width=".7"/></svg>
<svg class="a" style="left:3.8000000000000007px;top:318.18px" width="16" height="16" viewBox="0 0 16 16"><path d="M13.200 1.300c.8-.5 1.700.3 1.300 1.200l-3.600 5.700-2.700-2.600z" fill="#222"/><path d="M7.600 6l3 2.900-1 1.300-3.300-3.200z" fill="#222"/><path d="M5.700 7.500l3.400 3.300-3.700 3.800c-.4.400-.9.400-1.300 0l-2.300-2.200c-.4-.4-.4-.9 0-1.300z" fill="#222"/></svg>
<svg class="a" style="left:3.8000000000000007px;top:337.85px" width="16" height="16" viewBox="0 0 16 16"><circle cx="10" cy="5.800" r="3.900" fill="#222"/><path d="M7.300 8.600l-5.200 5.300" stroke="#222" stroke-width="1.500" stroke-linecap="round"/></svg>
<div class="a" style="left:3.800px;top:356.22px;width:16px;height:18px;font-family:'Liberation Serif',serif;font-weight:bold;font-size:17.5px;line-height:18px;text-align:center;color:#222">T</div>
<svg class="a" style="left:3.8000000000000007px;top:377.19000000000005px" width="16" height="16" viewBox="0 0 16 16"><path d="M8 1.300c2.300 2.300 3.800 4.500 3.800 6.800 0 1.300-.8 2.500-1.600 3.400h-4.400c-.8-.9-1.600-2.100-1.600-3.400 0-2.300 1.500-4.500 3.800-6.800z" fill="none" stroke="#222" stroke-width="1.100"/><path d="M8 2.500v4.800" stroke="#222" stroke-width=".9"/><circle cx="8" cy="8" r="1.100" fill="#222"/><path d="M5.300 12.500h5.400v2h-5.400z" fill="#222"/></svg>
<svg class="a" style="left:3.8000000000000007px;top:396.86000000000007px" width="16" height="16" viewBox="0 0 16 16"><path d="M2.500 2.500h11v11h-11zM2.500 7.300h11M7.300 2.500v11" fill="none" stroke="#222" stroke-width="1.100"/><path d="M1.500 1.500h2v2h-2zM12.500 1.500h2v2h-2zM1.500 12.500h2v2h-2zM12.500 12.500h2v2h-2z" fill="#222"/></svg>
<svg class="a" style="left:3.8000000000000007px;top:416.53000000000003px" width="16" height="16" viewBox="0 0 16 16"><path d="M5.200 8.500v-4.700c0-1.100 1.500-1.100 1.500 0v-1.300c0-1.100 1.600-1.100 1.600 0v1.100c0-1.100 1.600-1.100 1.600 0v1.500c0-1 1.500-1 1.500 0v5.200c0 2.400-1.300 4.200-3.600 4.200-1.800 0-2.700-.8-3.600-2.200l-1.900-3c-.6-.9.500-1.800 1.300-1z" fill="#f4f4f4" stroke="#222" stroke-width="1"/><path d="M6.700 3.800v3.700M8.300 3.600v3.900M9.900 5.100v2.400" stroke="#222" stroke-width=".8"/></svg>
<svg class="a" style="left:3.8000000000000007px;top:436.20000000000005px" width="16" height="16" viewBox="0 0 16 16"><circle cx="6.700" cy="6.700" r="4.400" fill="none" stroke="#222" stroke-width="1.300"/><path d="M10 10l4.300 4.300" stroke="#222" stroke-width="1.700" stroke-linecap="round"/></svg>
<svg class="a" style="left:4.500px;top:757.500px" width="15" height="15" viewBox="0 0 15 15"><path d="M.8 1h13v4.200h-9v9h-4z" fill="#222"/><path d="M3 3.600v1.600M5.200 3.600v1.600M7.400 3.600v1.600M9.600 3.600v1.600M11.800 3.600v1.600M3 7h1.800M3 9.200h1.800M3 11.400h1.800" stroke="#f0f0f0" stroke-width=".7"/></svg>
<svg class="a" style="left:4.500px;top:778.500px" width="15" height="13" viewBox="0 0 15 13"><rect x=".8" y=".8" width="13.200" height="11" fill="#f6f6f6" stroke="#777" stroke-width=".9"/><circle cx="7.400" cy="6.300" r="3.900" fill="none" stroke="#222" stroke-width=".9"/></svg>
<div class="a" style="left:7.300px;top:805.500px;width:9px;height:1px;background:#444"></div>
<div class="sb" style="left:24.4px;top:753px;width:55.4px;height:10.6px"></div>
<div class="sb" style="left:79.300px;top:753px;width:53.5px;height:10.6px"></div>
<div class="t" style="left:26.500px;top:752.4px;font-size:8.6px;">X:</div>
<div class="t" style="left:30px;width:45.3px;text-align:right;top:752.4px;font-size:8.6px;letter-spacing:-.4px;color:#111">96.65mm</div>
<div class="t" style="left:82.500px;top:752.4px;font-size:8.6px;">Y:</div>
<div class="t" style="left:86px;width:45.2px;text-align:right;top:752.4px;font-size:8.6px;letter-spacing:-.4px;color:#111">79.76mm</div>
<div class="sb" style="left:681px;top:753px;width:167.5px;height:10.6px;font-size:8.4px;letter-spacing:-.15px;">399.92mm x 468.37mm (200ppi)</div>
<div class="sb jp" style="left:853.6px;top:753px;width:86.3px;height:10.6px;font-size:8.4px;line-height:8.4px;font-size:8px;">RGBカラー</div>
<div class="sb jp" style="left:945.4px;top:753px;width:56.8px;height:10.6px;font-size:8.4px;background:#333;border-color:#333;color:#fff;line-height:8.4px;font-size:8px;">リピートオン</div>
<div class="sb" style="left:1007.6px;top:753px;width:41px;height:10.6px;font-size:8.4px;">128.14%</div>
<div class="a" style="left:24.4px;top:765.5px;width:1024.8px;height:43.2px;background:#333"></div>
<div class="a" style="left:25.2px;top:766.7px;width:42.8px;height:41px;border:1.300px solid #f4f4f4;border-radius:4.500px"></div>
<div class="a" style="left:24.400px;top:808.700px;width:1024.800px;height:9px;background:#f6f6f6;border:1px solid #dedede"></div>
<svg class="a" style="left:33.7px;top:767.9px" width="25.5" height="28.9" viewBox="0 0 25.5 28.9"><rect width="25.5" height="28.9" fill="#f3efe8"/>
<ellipse cx="14.6" cy="1.6" rx="2.300" ry="1.800" fill="#f9b233"/><ellipse cx="13.799999999999999" cy="4.2" rx=".9" ry="1.200" fill="#b3bd78"/>
<ellipse cx="21.3" cy="6.4" rx="2.300" ry="1.800" fill="#f9b233"/><ellipse cx="20.5" cy="9.0" rx=".9" ry="1.200" fill="#b3bd78"/>
<ellipse cx="2.2" cy="15.5" rx="2.300" ry="1.800" fill="#f9b233"/><ellipse cx="1.4000000000000001" cy="18.1" rx=".9" ry="1.200" fill="#b3bd78"/>
<ellipse cx="8.4" cy="21.3" rx="2.300" ry="1.800" fill="#f9b233"/><ellipse cx="7.6000000000000005" cy="23.900000000000002" rx=".9" ry="1.200" fill="#b3bd78"/>
<ellipse cx="16.3" cy="21.7" rx="2.100" ry="1.700" fill="#9bd7de"/><ellipse cx="17.1" cy="24.0" rx=".9" ry="1.100" fill="#b3bd78"/>
<ellipse cx="20.9" cy="16.3" rx="2.100" ry="1.700" fill="#9bd7de"/><ellipse cx="21.7" cy="18.6" rx=".9" ry="1.100" fill="#b3bd78"/>
<ellipse cx="6.6" cy="3.5" rx="2.100" ry="1.700" fill="#9bd7de"/><ellipse cx="7.3999999999999995" cy="5.8" rx=".9" ry="1.100" fill="#b3bd78"/>
<circle cx="10.1" cy="13.4" r="1.200" fill="#f7b9a8"/>
<circle cx="15.9" cy="8.4" r="1.200" fill="#f7b9a8"/>
<circle cx="3.5" cy="22.9" r="1.200" fill="#f7b9a8"/>
<circle cx="22" cy="26" r="1.200" fill="#f7b9a8"/>
<circle cx="5" cy="9" r=".7" fill="#c3cb96"/>
<circle cx="12" cy="6" r=".7" fill="#c3cb96"/>
<circle cx="19" cy="12" r=".7" fill="#c3cb96"/>
<circle cx="13" cy="17.5" r=".7" fill="#c3cb96"/>
<circle cx="3" cy="27" r=".7" fill="#c3cb96"/>
<circle cx="18" cy="27" r=".7" fill="#c3cb96"/>
<circle cx="9" cy="26" r=".7" fill="#c3cb96"/>
<rect x="0" y="0" width="6.300" height="8.400" fill="#ee3fa6"/><path d="M2 4.200v-1.700h1.500l1 1v.7z" fill="#fbd3ea"/><rect x="1.800" y="5.600" width="2.800" height="1.100" fill="#f9b4dc"/></svg>
<div class="t" style="left:27.500px;top:796.600px;color:#fff;font-size:6.900px;letter-spacing:-.12px;width:40px;overflow:hidden">* AdobeSto...</div>
<div class="a" style="left:1052.500px;top:40px;width:1px;height:777px;background:#dedede"></div>
<div class="a" style="left:1219.300px;top:40px;width:1px;height:777px;background:#dedede"></div>
<div class="hl" style="left:1056.400px;top:55.200px;width:160px"></div>
<div class="tab jp" style="left:1056.400px;top:40px;width:62.300px;height:15.700px;line-height:13.500px;font-size:8px">ナビゲーター</div>
<div class="a" style="left:1056.400px;top:58.800px;width:160px;height:223.500px;background:#999"></div>
<svg class="a" style="left:0;top:0" width="1450" height="300" viewBox="0 0 1450 300"><defs><pattern id="pat" patternUnits="userSpaceOnUse" x="0" y="0" width="80" height="94">
<g transform="translate(-1120 -94)"><ellipse cx="1108.5" cy="83.7" rx="4.5" ry="2.6" transform="rotate(4 1108.5 83.7)" fill="#fbb128" opacity="0.92"/><ellipse cx="1107.3" cy="85.8" rx="4.1" ry="2.3" transform="rotate(30 1107.3 85.8)" fill="#fbb128" opacity="0.92"/><ellipse cx="1104.8" cy="87.1" rx="3.5" ry="2.0" transform="rotate(65 1104.8 87.1)" fill="#fbb128" opacity="0.92"/><ellipse cx="1101.7" cy="87.2" rx="3.4" ry="1.9" transform="rotate(109 1101.7 87.2)" fill="#fbb128" opacity="0.92"/><ellipse cx="1099.0" cy="86.1" rx="4.0" ry="2.3" transform="rotate(146 1099.0 86.1)" fill="#fbb128" opacity="0.92"/><ellipse cx="1097.6" cy="84.0" rx="4.5" ry="2.6" transform="rotate(172 1097.6 84.0)" fill="#fbb128" opacity="0.92"/><ellipse cx="1097.9" cy="81.8" rx="4.4" ry="2.5" transform="rotate(-164 1097.9 81.8)" fill="#fbb128" opacity="0.92"/><ellipse cx="1099.8" cy="80.0" rx="3.8" ry="2.1" transform="rotate(-134 1099.8 80.0)" fill="#fbb128" opacity="0.92"/><ellipse cx="1102.8" cy="79.3" rx="3.3" ry="1.9" transform="rotate(-93 1102.8 79.3)" fill="#fbb128" opacity="0.92"/><ellipse cx="1105.8" cy="79.8" rx="3.7" ry="2.1" transform="rotate(-51 1105.8 79.8)" fill="#fbb128" opacity="0.92"/><ellipse cx="1107.9" cy="81.5" rx="4.3" ry="2.4" transform="rotate(-20 1107.9 81.5)" fill="#fbb128" opacity="0.92"/><ellipse cx="1103" cy="83.300" rx="5" ry="3.800" fill="#fbb128"/><path d="M1099.300 80.800l6.500 1-1.800 3.600z" fill="#b7b866"/><ellipse cx="1095.700" cy="91.600" rx="1.800" ry="4" transform="rotate(-28 1095.700 91.600)" fill="#a9b56c"/><ellipse cx="1101" cy="95.400" rx="1.700" ry="4" transform="rotate(45 1101 95.400)" fill="#a9b56c"/><ellipse cx="1128.3" cy="101.4" rx="3.4" ry="2.0" transform="rotate(14 1128.3 101.4)" fill="#fbb128" opacity="0.92"/><ellipse cx="1126.8" cy="103.0" rx="3.0" ry="1.8" transform="rotate(46 1126.8 103.0)" fill="#fbb128" opacity="0.92"/><ellipse cx="1124.4" cy="103.7" rx="2.7" ry="1.6" transform="rotate(89 1124.4 103.7)" fill="#fbb128" opacity="0.92"/><ellipse cx="1121.9" cy="103.1" rx="3.0" ry="1.7" transform="rotate(132 1121.9 103.1)" fill="#fbb128" opacity="0.92"/><ellipse cx="1120.3" cy="101.5" rx="3.4" ry="2.0" transform="rotate(165 1120.3 101.5)" fill="#fbb128" opacity="0.92"/><ellipse cx="1120.3" cy="99.4" rx="3.4" ry="2.0" transform="rotate(-166 1120.3 99.4)" fill="#fbb128" opacity="0.92"/><ellipse cx="1121.8" cy="97.8" rx="3.0" ry="1.8" transform="rotate(-134 1121.8 97.8)" fill="#fbb128" opacity="0.92"/><ellipse cx="1124.2" cy="97.1" rx="2.7" ry="1.6" transform="rotate(-91 1124.2 97.1)" fill="#fbb128" opacity="0.92"/><ellipse cx="1126.7" cy="97.7" rx="3.0" ry="1.7" transform="rotate(-48 1126.7 97.7)" fill="#fbb128" opacity="0.92"/><ellipse cx="1128.3" cy="99.3" rx="3.4" ry="2.0" transform="rotate(-15 1128.3 99.3)" fill="#fbb128" opacity="0.92"/><ellipse cx="1124.300" cy="100.400" rx="3.800" ry="3" fill="#fbb128"/><ellipse cx="1124.200" cy="101.300" rx="1.500" ry="1.200" fill="#b7b866"/><path d="M1121.300 105c-1.300 3.800-2.700 7.800-3.600 11.600" stroke="#a9b56c" stroke-width=".8" fill="none" opacity=".85"/><ellipse cx="1124.600" cy="111.100" rx="4" ry="1.900" transform="rotate(-12 1124.600 111.100)" fill="#a9b56c"/><ellipse cx="1073.3" cy="102.6" rx="3.8" ry="2.2" transform="rotate(10 1073.3 102.6)" fill="#acdfe5" opacity="0.9"/><ellipse cx="1071.8" cy="104.9" rx="3.6" ry="2.1" transform="rotate(45 1071.8 104.9)" fill="#acdfe5" opacity="0.9"/><ellipse cx="1069.2" cy="106.0" rx="3.5" ry="2.0" transform="rotate(83 1069.2 106.0)" fill="#acdfe5" opacity="0.9"/><ellipse cx="1066.4" cy="105.5" rx="3.5" ry="2.1" transform="rotate(122 1066.4 105.5)" fill="#acdfe5" opacity="0.9"/><ellipse cx="1064.5" cy="103.5" rx="3.8" ry="2.2" transform="rotate(158 1064.5 103.5)" fill="#acdfe5" opacity="0.9"/><ellipse cx="1064.1" cy="101.0" rx="3.8" ry="2.2" transform="rotate(-170 1064.1 101.0)" fill="#acdfe5" opacity="0.9"/><ellipse cx="1065.6" cy="98.7" rx="3.6" ry="2.1" transform="rotate(-135 1065.6 98.7)" fill="#acdfe5" opacity="0.9"/><ellipse cx="1068.2" cy="97.6" rx="3.5" ry="2.0" transform="rotate(-97 1068.2 97.6)" fill="#acdfe5" opacity="0.9"/><ellipse cx="1071.0" cy="98.1" rx="3.5" ry="2.1" transform="rotate(-58 1071.0 98.1)" fill="#acdfe5" opacity="0.9"/><ellipse cx="1072.9" cy="100.1" rx="3.8" ry="2.2" transform="rotate(-22 1072.9 100.1)" fill="#acdfe5" opacity="0.9"/><ellipse cx="1068.200" cy="100.800" rx="4.600" ry="3.600" transform="rotate(-25 1068.200 100.800)" fill="#79c4d3" opacity=".85"/><path d="M1066 102.600l4.800-1.800-1.300 2.600z" fill="#b0bb6e"/><path d="M1071 106.500l4 7.500" stroke="#a9b56c" stroke-width=".7" opacity=".8"/><ellipse cx="1077.700" cy="107" rx="2.200" ry="4" transform="rotate(22 1077.700 107)" fill="#a9b56c"/><ellipse cx="1072.300" cy="112.200" rx="4.200" ry="1.700" transform="rotate(32 1072.300 112.200)" fill="#a9b56c"/><circle cx="1078.4" cy="81" r="1.700" fill="#acdfe5" opacity=".9"/><circle cx="1082" cy="79.5" r="1.700" fill="#acdfe5" opacity=".9"/><circle cx="1086.8" cy="81" r="1.700" fill="#acdfe5" opacity=".9"/><circle cx="1082.4" cy="83.3" r="1.700" fill="#acdfe5" opacity=".9"/><circle cx="1087.6" cy="85.4" r="1.700" fill="#acdfe5" opacity=".9"/><circle cx="1076.6" cy="86.1" r="1.700" fill="#acdfe5" opacity=".9"/><circle cx="1081.3" cy="86.8" r="1.700" fill="#acdfe5" opacity=".9"/><path d="M1078.500 89.500l4 6.500M1083.800 89.300l.8 5.800M1082.800 95.500l3-5" stroke="#c3cb9c" stroke-width=".7" fill="none"/><circle cx="1116.6" cy="85.7" r=".8" fill="#acdfe5"/><circle cx="1119.9" cy="85.7" r=".8" fill="#acdfe5"/><circle cx="1114.4" cy="88.7" r=".8" fill="#acdfe5"/><circle cx="1117.7" cy="88.3" r=".8" fill="#acdfe5"/><circle cx="1121.0" cy="89.1" r=".8" fill="#acdfe5"/><circle cx="1113.6" cy="91.6" r=".8" fill="#acdfe5"/><circle cx="1115.8" cy="91.3" r=".8" fill="#acdfe5"/><circle cx="1118.4" cy="91.6" r=".8" fill="#acdfe5"/><circle cx="1116.6" cy="94.2" r=".8" fill="#acdfe5"/><ellipse cx="1066.300" cy="85.600" rx="3.400" ry="2.200" transform="rotate(28 1066.300 85.600)" fill="#a9b56c" opacity=".9"/><ellipse cx="1064.300" cy="84" rx="1.600" ry="1" transform="rotate(20 1064.300 84)" fill="#a9b56c"/><ellipse cx="1109.7" cy="106.3" rx="1.8" ry="1.4" transform="rotate(30 1109.7 106.3)" fill="#f8b8a6" opacity="0.9"/><ellipse cx="1107.9" cy="107.6" rx="1.9" ry="1.4" transform="rotate(89 1107.9 107.6)" fill="#f8b8a6" opacity="0.9"/><ellipse cx="1105.9" cy="106.4" rx="1.8" ry="1.4" transform="rotate(147 1105.9 106.4)" fill="#f8b8a6" opacity="0.9"/><ellipse cx="1105.9" cy="104.1" rx="1.8" ry="1.4" transform="rotate(-150 1105.9 104.1)" fill="#f8b8a6" opacity="0.9"/><ellipse cx="1107.7" cy="102.8" rx="1.9" ry="1.4" transform="rotate(-91 1107.7 102.8)" fill="#f8b8a6" opacity="0.9"/><ellipse cx="1109.7" cy="104.0" rx="1.8" ry="1.4" transform="rotate(-33 1109.7 104.0)" fill="#f8b8a6" opacity="0.9"/><circle cx="1107.800" cy="105.200" r="1.300" fill="#f4a08c"/><path d="M1108.900 109.500l.8 11.500" stroke="#a9b56c" stroke-width=".7" fill="none" opacity=".8"/><ellipse cx="1111.300" cy="112.500" rx=".9" ry="4.800" transform="rotate(15 1111.300 112.500)" fill="#a9b56c" opacity=".85"/><path d="M1098.600 112.200l7 8" stroke="#a9b56c" stroke-width=".6" opacity=".7"/><ellipse cx="1099.3" cy="112.8" rx="1.600" ry=".8" transform="rotate(35 1099.3 112.8)" fill="#a9b56c" opacity=".8"/><ellipse cx="1101.2" cy="114.6" rx="1.600" ry=".8" transform="rotate(35 1101.2 114.6)" fill="#a9b56c" opacity=".8"/><ellipse cx="1103" cy="116.8" rx="1.600" ry=".8" transform="rotate(35 1103 116.8)" fill="#a9b56c" opacity=".8"/><ellipse cx="1100.2" cy="115.6" rx="1.600" ry=".8" transform="rotate(35 1100.2 115.6)" fill="#a9b56c" opacity=".8"/><ellipse cx="1104.2" cy="115.8" rx="1.600" ry=".8" transform="rotate(35 1104.2 115.8)" fill="#a9b56c" opacity=".8"/><ellipse cx="1102.3" cy="118.2" rx="1.600" ry=".8" transform="rotate(35 1102.3 118.2)" fill="#a9b56c" opacity=".8"/><circle cx="1088.7" cy="118" r="2.200" fill="#f8b8a6"/><circle cx="1084.6" cy="121.7" r="2.200" fill="#f8b8a6"/><circle cx="1089.8" cy="123.2" r="2.200" fill="#f8b8a6"/><circle cx="1095.6" cy="124.3" r="2.200" fill="#f8b8a6"/><circle cx="1085.7" cy="127.2" r="2.200" fill="#f8b8a6"/><ellipse cx="1084.6" cy="117.3" rx="1.200" ry=".8" transform="rotate(40 1084.6 117.3)" fill="#a9b56c"/><ellipse cx="1092.3" cy="120.3" rx="1.200" ry=".8" transform="rotate(40 1092.3 120.3)" fill="#a9b56c"/><ellipse cx="1082.8" cy="123.9" rx="1.200" ry=".8" transform="rotate(40 1082.8 123.9)" fill="#a9b56c"/><ellipse cx="1091.2" cy="126.9" rx="1.200" ry=".8" transform="rotate(40 1091.2 126.9)" fill="#a9b56c"/><ellipse cx="1094.5" cy="128.7" rx="1.200" ry=".8" transform="rotate(40 1094.5 128.7)" fill="#a9b56c"/><path d="M1057 112.500l5.500 4.500M1059 111.500l1.500 4M1057 115.300l4.500 1.200M1061.500 113l.8 4" stroke="#f6dcb4" stroke-width=".8" fill="none"/></g>
<g transform="translate(-1040 -94)"><ellipse cx="1108.5" cy="83.7" rx="4.5" ry="2.6" transform="rotate(4 1108.5 83.7)" fill="#fbb128" opacity="0.92"/><ellipse cx="1107.3" cy="85.8" rx="4.1" ry="2.3" transform="rotate(30 1107.3 85.8)" fill="#fbb128" opacity="0.92"/><ellipse cx="1104.8" cy="87.1" rx="3.5" ry="2.0" transform="rotate(65 1104.8 87.1)" fill="#fbb128" opacity="0.92"/><ellipse cx="1101.7" cy="87.2" rx="3.4" ry="1.9" transform="rotate(109 1101.7 87.2)" fill="#fbb128" opacity="0.92"/><ellipse cx="1099.0" cy="86.1" rx="4.0" ry="2.3" transform="rotate(146 1099.0 86.1)" fill="#fbb128" opacity="0.92"/><ellipse cx="1097.6" cy="84.0" rx="4.5" ry="2.6" transform="rotate(172 1097.6 84.0)" fill="#fbb128" opacity="0.92"/><ellipse cx="1097.9" cy="81.8" rx="4.4" ry="2.5" transform="rotate(-164 1097.9 81.8)" fill="#fbb128" opacity="0.92"/><ellipse cx="1099.8" cy="80.0" rx="3.8" ry="2.1" transform="rotate(-134 1099.8 80.0)" fill="#fbb128" opacity="0.92"/><ellipse cx="1102.8" cy="79.3" rx="3.3" ry="1.9" transform="rotate(-93 1102.8 79.3)" fill="#fbb128" opacity="0.92"/><ellipse cx="1105.8" cy="79.8" rx="3.7" ry="2.1" transform="rotate(-51 1105.8 79.8)" fill="#fbb128" opacity="0.92"/><ellipse cx="1107.9" cy="81.5" rx="4.3" ry="2.4" transform="rotate(-20 1107.9 81.5)" fill="#fbb128" opacity="0.92"/><ellipse cx="1103" cy="83.300" rx="5" ry="3.800" fill="#fbb128"/><path d="M1099.300 80.800l6.500 1-1.800 3.600z" fill="#b7b866"/><ellipse cx="1095.700" cy="91.600" rx="1.800" ry="4" transform="rotate(-28 1095.700 91.600)" fill="#a9b56c"/><ellipse cx="1101" cy="95.400" rx="1.700" ry="4" transform="rotate(45 1101 95.400)" fill="#a9b56c"/><ellipse cx="1128.3" cy="101.4" rx="3.4" ry="2.0" transform="rotate(14 1128.3 101.4)" fill="#fbb128" opacity="0.92"/><ellipse cx="1126.8" cy="103.0" rx="3.0" ry="1.8" transform="rotate(46 1126.8 103.0)" fill="#fbb128" opacity="0.92"/><ellipse cx="1124.4" cy="103.7" rx="2.7" ry="1.6" transform="rotate(89 1124.4 103.7)" fill="#fbb128" opacity="0.92"/><ellipse cx="1121.9" cy="103.1" rx="3.0" ry="1.7" transform="rotate(132 1121.9 103.1)" fill="#fbb128" opacity="0.92"/><ellipse cx="1120.3" cy="101.5" rx="3.4" ry="2.0" transform="rotate(165 1120.3 101.5)" fill="#fbb128" opacity="0.92"/><ellipse cx="1120.3" cy="99.4" rx="3.4" ry="2.0" transform="rotate(-166 1120.3 99.4)" fill="#fbb128" opacity="0.92"/><ellipse cx="1121.8" cy="97.8" rx="3.0" ry="1.8" transform="rotate(-134 1121.8 97.8)" fill="#fbb128" opacity="0.92"/><ellipse cx="1124.2" cy="97.1" rx="2.7" ry="1.6" transform="rotate(-91 1124.2 97.1)" fill="#fbb128" opacity="0.92"/><ellipse cx="1126.7" cy="97.7" rx="3.0" ry="1.7" transform="rotate(-48 1126.7 97.7)" fill="#fbb128" opacity="0.92"/><ellipse cx="1128.3" cy="99.3" rx="3.4" ry="2.0" transform="rotate(-15 1128.3 99.3)" fill="#fbb128" opacity="0.92"/><ellipse cx="1124.300" cy="100.400" rx="3.800" ry="3" fill="#fbb128"/><ellipse cx="1124.200" cy="101.300" rx="1.500" ry="1.200" fill="#b7b866"/><path d="M1121.300 105c-1.300 3.800-2.700 7.800-3.600 11.600" stroke="#a9b56c" stroke-width=".8" fill="none" opacity=".85"/><ellipse cx="1124.600" cy="111.100" rx="4" ry="1.900" transform="rotate(-12 1124.600 111.100)" fill="#a9b56c"/><ellipse cx="1073.3" cy="102.6" rx="3.8" ry="2.2" transform="rotate(10 1073.3 102.6)" fill="#acdfe5" opacity="0.9"/><ellipse cx="1071.8" cy="104.9" rx="3.6" ry="2.1" transform="rotate(45 1071.8 104.9)" fill="#acdfe5" opacity="0.9"/><ellipse cx="1069.2" cy="106.0" rx="3.5" ry="2.0" transform="rotate(83 1069.2 106.0)" fill="#acdfe5" opacity="0.9"/><ellipse cx="1066.4" cy="105.5" rx="3.5" ry="2.1" transform="rotate(122 1066.4 105.5)" fill="#acdfe5" opacity="0.9"/><ellipse cx="1064.5" cy="103.5" rx="3.8" ry="2.2" transform="rotate(158 1064.5 103.5)" fill="#acdfe5" opacity="0.9"/><ellipse cx="1064.1" cy="101.0" rx="3.8" ry="2.2" transform="rotate(-170 1064.1 101.0)" fill="#acdfe5" opacity="0.9"/><ellipse cx="1065.6" cy="98.7" rx="3.6" ry="2.1" transform="rotate(-135 1065.6 98.7)" fill="#acdfe5" opacity="0.9"/><ellipse cx="1068.2" cy="97.6" rx="3.5" ry="2.0" transform="rotate(-97 1068.2 97.6)" fill="#acdfe5" opacity="0.9"/><ellipse cx="1071.0" cy="98.1" rx="3.5" ry="2.1" transform="rotate(-58 1071.0 98.1)" fill="#acdfe5" opacity="0.9"/><ellipse cx="1072.9" cy="100.1" rx="3.8" ry="2.2" transform="rotate(-22 1072.9 100.1)" fill="#acdfe5" opacity="0.9"/><ellipse cx="1068.200" cy="100.800" rx="4.600" ry="3.600" transform="rotate(-25 1068.200 100.800)" fill="#79c4d3" opacity=".85"/><path d="M1066 102.600l4.800-1.800-1.300 2.600z" fill="#b0bb6e"/><path d="M1071 106.500l4 7.500" stroke="#a9b56c" stroke-width=".7" opacity=".8"/><ellipse cx="1077.700" cy="107" rx="2.200" ry="4" transform="rotate(22 1077.700 107)" fill="#a9b56c"/><ellipse cx="1072.300" cy="112.200" rx="4.200" ry="1.700" transform="rotate(32 1072.300 112.200)" fill="#a9b56c"/><circle cx="1078.4" cy="81" r="1.700" fill="#acdfe5" opacity=".9"/><circle cx="1082" cy="79.5" r="1.700" fill="#acdfe5" opacity=".9"/><circle cx="1086.8" cy="81" r="1.700" fill="#acdfe5" opacity=".9"/><circle cx="1082.4" cy="83.3" r="1.700" fill="#acdfe5" opacity=".9"/><circle cx="1087.6" cy="85.4" r="1.700" fill="#acdfe5" opacity=".9"/><circle cx="1076.6" cy="86.1" r="1.700" fill="#acdfe5" opacity=".9"/><circle cx="1081.3" cy="86.8" r="1.700" fill="#acdfe5" opacity=".9"/><path d="M1078.500 89.500l4 6.500M1083.800 89.300l.8 5.800M1082.800 95.500l3-5" stroke="#c3cb9c" stroke-width=".7" fill="none"/><circle cx="1116.6" cy="85.7" r=".8" fill="#acdfe5"/><circle cx="1119.9" cy="85.7" r=".8" fill="#acdfe5"/><circle cx="1114.4" cy="88.7" r=".8" fill="#acdfe5"/><circle cx="1117.7" cy="88.3" r=".8" fill="#acdfe5"/><circle cx="1121.0" cy="89.1" r=".8" fill="#acdfe5"/><circle cx="1113.6" cy="91.6" r=".8" fill="#acdfe5"/><circle cx="1115.8" cy="91.3" r=".8" fill="#acdfe5"/><circle cx="1118.4" cy="91.6" r=".8" fill="#acdfe5"/><circle cx="1116.6" cy="94.2" r=".8" fill="#acdfe5"/><ellipse cx="1066.300" cy="85.600" rx="3.400" ry="2.200" transform="rotate(28 1066.300 85.600)" fill="#a9b56c" opacity=".9"/><ellipse cx="1064.300" cy="84" rx="1.600" ry="1" transform="rotate(20 1064.300 84)" fill="#a9b56c"/><ellipse cx="1109.7" cy="106.3" rx="1.8" ry="1.4" transform="rotate(30 1109.7 106.3)" fill="#f8b8a6" opacity="0.9"/><ellipse cx="1107.9" cy="107.6" rx="1.9" ry="1.4" transform="rotate(89 1107.9 107.6)" fill="#f8b8a6" opacity="0.9"/><ellipse cx="1105.9" cy="106.4" rx="1.8" ry="1.4" transform="rotate(147 1105.9 106.4)" fill="#f8b8a6" opacity="0.9"/><ellipse cx="1105.9" cy="104.1" rx="1.8" ry="1.4" transform="rotate(-150 1105.9 104.1)" fill="#f8b8a6" opacity="0.9"/><ellipse cx="1107.7" cy="102.8" rx="1.9" ry="1.4" transform="rotate(-91 1107.7 102.8)" fill="#f8b8a6" opacity="0.9"/><ellipse cx="1109.7" cy="104.0" rx="1.8" ry="1.4" transform="rotate(-33 1109.7 104.0)" fill="#f8b8a6" opacity="0.9"/><circle cx="1107.800" cy="105.200" r="1.300" fill="#f4a08c"/><path d="M1108.900 109.500l.8 11.500" stroke="#a9b56c" stroke-width=".7" fill="none" opacity=".8"/><ellipse cx="1111.300" cy="112.500" rx=".9" ry="4.800" transform="rotate(15 1111.300 112.500)" fill="#a9b56c" opacity=".85"/><path d="M1098.600 112.200l7 8" stroke="#a9b56c" stroke-width=".6" opacity=".7"/><ellipse cx="1099.3" cy="112.8" rx="1.600" ry=".8" transform="rotate(35 1099.3 112.8)" fill="#a9b56c" opacity=".8"/><ellipse cx="1101.2" cy="114.6" rx="1.600" ry=".8" transform="rotate(35 1101.2 114.6)" fill="#a9b56c" opacity=".8"/><ellipse cx="1103" cy="116.8" rx="1.600" ry=".8" transform="rotate(35 1103 116.8)" fill="#a9b56c" opacity=".8"/><ellipse cx="1100.2" cy="115.6" rx="1.600" ry=".8" transform="rotate(35 1100.2 115.6)" fill="#a9b56c" opacity=".8"/><ellipse cx="1104.2" cy="115.8" rx="1.600" ry=".8" transform="rotate(35 1104.2 115.8)" fill="#a9b56c" opacity=".8"/><ellipse cx="1102.3" cy="118.2" rx="1.600" ry=".8" transform="rotate(35 1102.3 118.2)" fill="#a9b56c" opacity=".8"/><circle cx="1088.7" cy="118" r="2.200" fill="#f8b8a6"/><circle cx="1084.6" cy="121.7" r="2.200" fill="#f8b8a6"/><circle cx="1089.8" cy="123.2" r="2.200" fill="#f8b8a6"/><circle cx="1095.6" cy="124.3" r="2.200" fill="#f8b8a6"/><circle cx="1085.7" cy="127.2" r="2.200" fill="#f8b8a6"/><ellipse cx="1084.6" cy="117.3" rx="1.200" ry=".8" transform="rotate(40 1084.6 117.3)" fill="#a9b56c"/><ellipse cx="1092.3" cy="120.3" rx="1.200" ry=".8" transform="rotate(40 1092.3 120.3)" fill="#a9b56c"/><ellipse cx="1082.8" cy="123.9" rx="1.200" ry=".8" transform="rotate(40 1082.8 123.9)" fill="#a9b56c"/><ellipse cx="1091.2" cy="126.9" rx="1.200" ry=".8" transform="rotate(40 1091.2 126.9)" fill="#a9b56c"/><ellipse cx="1094.5" cy="128.7" rx="1.200" ry=".8" transform="rotate(40 1094.5 128.7)" fill="#a9b56c"/><path d="M1057 112.500l5.500 4.500M1059 111.500l1.500 4M1057 115.300l4.500 1.200M1061.500 113l.8 4" stroke="#f6dcb4" stroke-width=".8" fill="none"/></g>
<g transform="translate(-1080 -47)"><ellipse cx="1108.5" cy="83.7" rx="4.5" ry="2.6" transform="rotate(4 1108.5 83.7)" fill="#fbb128" opacity="0.92"/><ellipse cx="1107.3" cy="85.8" rx="4.1" ry="2.3" transform="rotate(30 1107.3 85.8)" fill="#fbb128" opacity="0.92"/><ellipse cx="1104.8" cy="87.1" rx="3.5" ry="2.0" transform="rotate(65 1104.8 87.1)" fill="#fbb128" opacity="0.92"/><ellipse cx="1101.7" cy="87.2" rx="3.4" ry="1.9" transform="rotate(109 1101.7 87.2)" fill="#fbb128" opacity="0.92"/><ellipse cx="1099.0" cy="86.1" rx="4.0" ry="2.3" transform="rotate(146 1099.0 86.1)" fill="#fbb128" opacity="0.92"/><ellipse cx="1097.6" cy="84.0" rx="4.5" ry="2.6" transform="rotate(172 1097.6 84.0)" fill="#fbb128" opacity="0.92"/><ellipse cx="1097.9" cy="81.8" rx="4.4" ry="2.5" transform="rotate(-164 1097.9 81.8)" fill="#fbb128" opacity="0.92"/><ellipse cx="1099.8" cy="80.0" rx="3.8" ry="2.1" transform="rotate(-134 1099.8 80.0)" fill="#fbb128" opacity="0.92"/><ellipse cx="1102.8" cy="79.3" rx="3.3" ry="1.9" transform="rotate(-93 1102.8 79.3)" fill="#fbb128" opacity="0.92"/><ellipse cx="1105.8" cy="79.8" rx="3.7" ry="2.1" transform="rotate(-51 1105.8 79.8)" fill="#fbb128" opacity="0.92"/><ellipse cx="1107.9" cy="81.5" rx="4.3" ry="2.4" transform="rotate(-20 1107.9 81.5)" fill="#fbb128" opacity="0.92"/><ellipse cx="1103" cy="83.300" rx="5" ry="3.800" fill="#fbb128"/><path d="M1099.300 80.800l6.500 1-1.800 3.600z" fill="#b7b866"/><ellipse cx="1095.700" cy="91.600" rx="1.800" ry="4" transform="rotate(-28 1095.700 91.600)" fill="#a9b56c"/><ellipse cx="1101" cy="95.400" rx="1.700" ry="4" transform="rotate(45 1101 95.400)" fill="#a9b56c"/><ellipse cx="1128.3" cy="101.4" rx="3.4" ry="2.0" transform="rotate(14 1128.3 101.4)" fill="#fbb128" opacity="0.92"/><ellipse cx="1126.8" cy="103.0" rx="3.0" ry="1.8" transform="rotate(46 1126.8 103.0)" fill="#fbb128" opacity="0.92"/><ellipse cx="1124.4" cy="103.7" rx="2.7" ry="1.6" transform="rotate(89 1124.4 103.7)" fill="#fbb128" opacity="0.92"/><ellipse cx="1121.9" cy="103.1" rx="3.0" ry="1.7" transform="rotate(132 1121.9 103.1)" fill="#fbb128" opacity="0.92"/><ellipse cx="1120.3" cy="101.5" rx="3.4" ry="2.0" transform="rotate(165 1120.3 101.5)" fill="#fbb128" opacity="0.92"/><ellipse cx="1120.3" cy="99.4" rx="3.4" ry="2.0" transform="rotate(-166 1120.3 99.4)" fill="#fbb128" opacity="0.92"/><ellipse cx="1121.8" cy="97.8" rx="3.0" ry="1.8" transform="rotate(-134 1121.8 97.8)" fill="#fbb128" opacity="0.92"/><ellipse cx="1124.2" cy="97.1" rx="2.7" ry="1.6" transform="rotate(-91 1124.2 97.1)" fill="#fbb128" opacity="0.92"/><ellipse cx="1126.7" cy="97.7" rx="3.0" ry="1.7" transform="rotate(-48 1126.7 97.7)" fill="#fbb128" opacity="0.92"/><ellipse cx="1128.3" cy="99.3" rx="3.4" ry="2.0" transform="rotate(-15 1128.3 99.3)" fill="#fbb128" opacity="0.92"/><ellipse cx="1124.300" cy="100.400" rx="3.800" ry="3" fill="#fbb128"/><ellipse cx="1124.200" cy="101.300" rx="1.500" ry="1.200" fill="#b7b866"/><path d="M1121.300 105c-1.300 3.800-2.700 7.800-3.600 11.600" stroke="#a9b56c" stroke-width=".8" fill="none" opacity=".85"/><ellipse cx="1124.600" cy="111.100" rx="4" ry="1.900" transform="rotate(-12 1124.600 111.100)" fill="#a9b56c"/><ellipse cx="1073.3" cy="102.6" rx="3.8" ry="2.2" transform="rotate(10 1073.3 102.6)" fill="#acdfe5" opacity="0.9"/><ellipse cx="1071.8" cy="104.9" rx="3.6" ry="2.1" transform="rotate(45 1071.8 104.9)" fill="#acdfe5" opacity="0.9"/><ellipse cx="1069.2" cy="106.0" rx="3.5" ry="2.0" transform="rotate(83 1069.2 106.0)" fill="#acdfe5" opacity="0.9"/><ellipse cx="1066.4" cy="105.5" rx="3.5" ry="2.1" transform="rotate(122 1066.4 105.5)" fill="#acdfe5" opacity="0.9"/><ellipse cx="1064.5" cy="103.5" rx="3.8" ry="2.2" transform="rotate(158 1064.5 103.5)" fill="#acdfe5" opacity="0.9"/><ellipse cx="1064.1" cy="101.0" rx="3.8" ry="2.2" transform="rotate(-170 1064.1 101.0)" fill="#acdfe5" opacity="0.9"/><ellipse cx="1065.6" cy="98.7" rx="3.6" ry="2.1" transform="rotate(-135 1065.6 98.7)" fill="#acdfe5" opacity="0.9"/><ellipse cx="1068.2" cy="97.6" rx="3.5" ry="2.0" transform="rotate(-97 1068.2 97.6)" fill="#acdfe5" opacity="0.9"/><ellipse cx="1071.0" cy="98.1" rx="3.5" ry="2.1" transform="rotate(-58 1071.0 98.1)" fill="#acdfe5" opacity="0.9"/><ellipse cx="1072.9" cy="100.1" rx="3.8" ry="2.2" transform="rotate(-22 1072.9 100.1)" fill="#acdfe5" opacity="0.9"/><ellipse cx="1068.200" cy="100.800" rx="4.600" ry="3.600" transform="rotate(-25 1068.200 100.800)" fill="#79c4d3" opacity=".85"/><path d="M1066 102.600l4.800-1.800-1.300 2.600z" fill="#b0bb6e"/><path d="M1071 106.500l4 7.500" stroke="#a9b56c" stroke-width=".7" opacity=".8"/><ellipse cx="1077.700" cy="107" rx="2.200" ry="4" transform="rotate(22 1077.700 107)" fill="#a9b56c"/><ellipse cx="1072.300" cy="112.200" rx="4.200" ry="1.700" transform="rotate(32 1072.300 112.200)" fill="#a9b56c"/><circle cx="1078.4" cy="81" r="1.700" fill="#acdfe5" opacity=".9"/><circle cx="1082" cy="79.5" r="1.700" fill="#acdfe5" opacity=".9"/><circle cx="1086.8" cy="81" r="1.700" fill="#acdfe5" opacity=".9"/><circle cx="1082.4" cy="83.3" r="1.700" fill="#acdfe5" opacity=".9"/><circle cx="1087.6" cy="85.4" r="1.700" fill="#acdfe5" opacity=".9"/><circle cx="1076.6" cy="86.1" r="1.700" fill="#acdfe5" opacity=".9"/><circle cx="1081.3" cy="86.8" r="1.700" fill="#acdfe5" opacity=".9"/><path d="M1078.500 89.500l4 6.500M1083.800 89.300l.8 5.800M1082.800 95.500l3-5" stroke="#c3cb9c" stroke-width=".7" fill="none"/><circle cx="1116.6" cy="85.7" r=".8" fill="#acdfe5"/><circle cx="1119.9" cy="85.7" r=".8" fill="#acdfe5"/><circle cx="1114.4" cy="88.7" r=".8" fill="#acdfe5"/><circle cx="1117.7" cy="88.3" r=".8" fill="#acdfe5"/><circle cx="1121.0" cy="89.1" r=".8" fill="#acdfe5"/><circle cx="1113.6" cy="91.6" r=".8" fill="#acdfe5"/><circle cx="1115.8" cy="91.3" r=".8" fill="#acdfe5"/><circle cx="1118.4" cy="91.6" r=".8" fill="#acdfe5"/><circle cx="1116.6" cy="94.2" r=".8" fill="#acdfe5"/><ellipse cx="1066.300" cy="85.600" rx="3.400" ry="2.200" transform="rotate(28 1066.300 85.600)" fill="#a9b56c" opacity=".9"/><ellipse cx="1064.300" cy="84" rx="1.600" ry="1" transform="rotate(20 1064.300 84)" fill="#a9b56c"/><ellipse cx="1109.7" cy="106.3" rx="1.8" ry="1.4" transform="rotate(30 1109.7 106.3)" fill="#f8b8a6" opacity="0.9"/><ellipse cx="1107.9" cy="107.6" rx="1.9" ry="1.4" transform="rotate(89 1107.9 107.6)" fill="#f8b8a6" opacity="0.9"/><ellipse cx="1105.9" cy="106.4" rx="1.8" ry="1.4" transform="rotate(147 1105.9 106.4)" fill="#f8b8a6" opacity="0.9"/><ellipse cx="1105.9" cy="104.1" rx="1.8" ry="1.4" transform="rotate(-150 1105.9 104.1)" fill="#f8b8a6" opacity="0.9"/><ellipse cx="1107.7" cy="102.8" rx="1.9" ry="1.4" transform="rotate(-91 1107.7 102.8)" fill="#f8b8a6" opacity="0.9"/><ellipse cx="1109.7" cy="104.0" rx="1.8" ry="1.4" transform="rotate(-33 1109.7 104.0)" fill="#f8b8a6" opacity="0.9"/><circle cx="1107.800" cy="105.200" r="1.300" fill="#f4a08c"/><path d="M1108.900 109.500l.8 11.500" stroke="#a9b56c" stroke-width=".7" fill="none" opacity=".8"/><ellipse cx="1111.300" cy="112.500" rx=".9" ry="4.800" transform="rotate(15 1111.300 112.500)" fill="#a9b56c" opacity=".85"/><path d="M1098.600 112.200l7 8" stroke="#a9b56c" stroke-width=".6" opacity=".7"/><ellipse cx="1099.3" cy="112.8" rx="1.600" ry=".8" transform="rotate(35 1099.3 112.8)" fill="#a9b56c" opacity=".8"/><ellipse cx="1101.2" cy="114.6" rx="1.600" ry=".8" transform="rotate(35 1101.2 114.6)" fill="#a9b56c" opacity=".8"/><ellipse cx="1103" cy="116.8" rx="1.600" ry=".8" transform="rotate(35 1103 116.8)" fill="#a9b56c" opacity=".8"/><ellipse cx="1100.2" cy="115.6" rx="1.600" ry=".8" transform="rotate(35 1100.2 115.6)" fill="#a9b56c" opacity=".8"/><ellipse cx="1104.2" cy="115.8" rx="1.600" ry=".8" transform="rotate(35 1104.2 115.8)" fill="#a9b56c" opacity=".8"/><ellipse cx="1102.3" cy="118.2" rx="1.600" ry=".8" transform="rotate(35 1102.3 118.2)" fill="#a9b56c" opacity=".8"/><circle cx="1088.7" cy="118" r="2.200" fill="#f8b8a6"/><circle cx="1084.6" cy="121.7" r="2.200" fill="#f8b8a6"/><circle cx="1089.8" cy="123.2" r="2.200" fill="#f8b8a6"/><circle cx="1095.6" cy="124.3" r="2.200" fill="#f8b8a6"/><circle cx="1085.7" cy="127.2" r="2.200" fill="#f8b8a6"/><ellipse cx="1084.6" cy="117.3" rx="1.200" ry=".8" transform="rotate(40 1084.6 117.3)" fill="#a9b56c"/><ellipse cx="1092.3" cy="120.3" rx="1.200" ry=".8" transform="rotate(40 1092.3 120.3)" fill="#a9b56c"/><ellipse cx="1082.8" cy="123.9" rx="1.200" ry=".8" transform="rotate(40 1082.8 123.9)" fill="#a9b56c"/><ellipse cx="1091.2" cy="126.9" rx="1.200" ry=".8" transform="rotate(40 1091.2 126.9)" fill="#a9b56c"/><ellipse cx="1094.5" cy="128.7" rx="1.200" ry=".8" transform="rotate(40 1094.5 128.7)" fill="#a9b56c"/><path d="M1057 112.500l5.500 4.500M1059 111.500l1.500 4M1057 115.300l4.500 1.200M1061.500 113l.8 4" stroke="#f6dcb4" stroke-width=".8" fill="none"/></g>
<g transform="translate(-1000 -47)"><ellipse cx="1108.5" cy="83.7" rx="4.5" ry="2.6" transform="rotate(4 1108.5 83.7)" fill="#fbb128" opacity="0.92"/><ellipse cx="1107.3" cy="85.8" rx="4.1" ry="2.3" transform="rotate(30 1107.3 85.8)" fill="#fbb128" opacity="0.92"/><ellipse cx="1104.8" cy="87.1" rx="3.5" ry="2.0" transform="rotate(65 1104.8 87.1)" fill="#fbb128" opacity="0.92"/><ellipse cx="1101.7" cy="87.2" rx="3.4" ry="1.9" transform="rotate(109 1101.7 87.2)" fill="#fbb128" opacity="0.92"/><ellipse cx="1099.0" cy="86.1" rx="4.0" ry="2.3" transform="rotate(146 1099.0 86.1)" fill="#fbb128" opacity="0.92"/><ellipse cx="1097.6" cy="84.0" rx="4.5" ry="2.6" transform="rotate(172 1097.6 84.0)" fill="#fbb128" opacity="0.92"/><ellipse cx="1097.9" cy="81.8" rx="4.4" ry="2.5" transform="rotate(-164 1097.9 81.8)" fill="#fbb128" opacity="0.92"/><ellipse cx="1099.8" cy="80.0" rx="3.8" ry="2.1" transform="rotate(-134 1099.8 80.0)" fill="#fbb128" opacity="0.92"/><ellipse cx="1102.8" cy="79.3" rx="3.3" ry="1.9" transform="rotate(-93 1102.8 79.3)" fill="#fbb128" opacity="0.92"/><ellipse cx="1105.8" cy="79.8" rx="3.7" ry="2.1" transform="rotate(-51 1105.8 79.8)" fill="#fbb128" opacity="0.92"/><ellipse cx="1107.9" cy="81.5" rx="4.3" ry="2.4" transform="rotate(-20 1107.9 81.5)" fill="#fbb128" opacity="0.92"/><ellipse cx="1103" cy="83.300" rx="5" ry="3.800" fill="#fbb128"/><path d="M1099.300 80.800l6.500 1-1.800 3.600z" fill="#b7b866"/><ellipse cx="1095.700" cy="91.600" rx="1.800" ry="4" transform="rotate(-28 1095.700 91.600)" fill="#a9b56c"/><ellipse cx="1101" cy="95.400" rx="1.700" ry="4" transform="rotate(45 1101 95.400)" fill="#a9b56c"/><ellipse cx="1128.3" cy="101.4" rx="3.4" ry="2.0" transform="rotate(14 1128.3 101.4)" fill="#fbb128" opacity="0.92"/><ellipse cx="1126.8" cy="103.0" rx="3.0" ry="1.8" transform="rotate(46 1126.8 103.0)" fill="#fbb128" opacity="0.92"/><ellipse cx="1124.4" cy="103.7" rx="2.7" ry="1.6" transform="rotate(89 1124.4 103.7)" fill="#fbb128" opacity="0.92"/><ellipse cx="1121.9" cy="103.1" rx="3.0" ry="1.7" transform="rotate(132 1121.9 103.1)" fill="#fbb128" opacity="0.92"/><ellipse cx="1120.3" cy="101.5" rx="3.4" ry="2.0" transform="rotate(165 1120.3 101.5)" fill="#fbb128" opacity="0.92"/><ellipse cx="1120.3" cy="99.4" rx="3.4" ry="2.0" transform="rotate(-166 1120.3 99.4)" fill="#fbb128" opacity="0.92"/><ellipse cx="1121.8" cy="97.8" rx="3.0" ry="1.8" transform="rotate(-134 1121.8 97.8)" fill="#fbb128" opacity="0.92"/><ellipse cx="1124.2" cy="97.1" rx="2.7" ry="1.6" transform="rotate(-91 1124.2 97.1)" fill="#fbb128" opacity="0.92"/><ellipse cx="1126.7" cy="97.7" rx="3.0" ry="1.7" transform="rotate(-48 1126.7 97.7)" fill="#fbb128" opacity="0.92"/><ellipse cx="1128.3" cy="99.3" rx="3.4" ry="2.0" transform="rotate(-15 1128.3 99.3)" fill="#fbb128" opacity="0.92"/><ellipse cx="1124.300" cy="100.400" rx="3.800" ry="3" fill="#fbb128"/><ellipse cx="1124.200" cy="101.300" rx="1.500" ry="1.200" fill="#b7b866"/><path d="M1121.300 105c-1.300 3.800-2.700 7.800-3.600 11.600" stroke="#a9b56c" stroke-width=".8" fill="none" opacity=".85"/><ellipse cx="1124.600" cy="111.100" rx="4" ry="1.900" transform="rotate(-12 1124.600 111.100)" fill="#a9b56c"/><ellipse cx="1073.3" cy="102.6" rx="3.8" ry="2.2" transform="rotate(10 1073.3 102.6)" fill="#acdfe5" opacity="0.9"/><ellipse cx="1071.8" cy="104.9" rx="3.6" ry="2.1" transform="rotate(45 1071.8 104.9)" fill="#acdfe5" opacity="0.9"/><ellipse cx="1069.2" cy="106.0" rx="3.5" ry="2.0" transform="rotate(83 1069.2 106.0)" fill="#acdfe5" opacity="0.9"/><ellipse cx="1066.4" cy="105.5" rx="3.5" ry="2.1" transform="rotate(122 1066.4 105.5)" fill="#acdfe5" opacity="0.9"/><ellipse cx="1064.5" cy="103.5" rx="3.8" ry="2.2" transform="rotate(158 1064.5 103.5)" fill="#acdfe5" opacity="0.9"/><ellipse cx="1064.1" cy="101.0" rx="3.8" ry="2.2" transform="rotate(-170 1064.1 101.0)" fill="#acdfe5" opacity="0.9"/><ellipse cx="1065.6" cy="98.7" rx="3.6" ry="2.1" transform="rotate(-135 1065.6 98.7)" fill="#acdfe5" opacity="0.9"/><ellipse cx="1068.2" cy="97.6" rx="3.5" ry="2.0" transform="rotate(-97 1068.2 97.6)" fill="#acdfe5" opacity="0.9"/><ellipse cx="1071.0" cy="98.1" rx="3.5" ry="2.1" transform="rotate(-58 1071.0 98.1)" fill="#acdfe5" opacity="0.9"/><ellipse cx="1072.9" cy="100.1" rx="3.8" ry="2.2" transform="rotate(-22 1072.9 100.1)" fill="#acdfe5" opacity="0.9"/><ellipse cx="1068.200" cy="100.800" rx="4.600" ry="3.600" transform="rotate(-25 1068.200 100.800)" fill="#79c4d3" opacity=".85"/><path d="M1066 102.600l4.800-1.800-1.300 2.600z" fill="#b0bb6e"/><path d="M1071 106.500l4 7.500" stroke="#a9b56c" stroke-width=".7" opacity=".8"/><ellipse cx="1077.700" cy="107" rx="2.200" ry="4" transform="rotate(22 1077.700 107)" fill="#a9b56c"/><ellipse cx="1072.300" cy="112.200" rx="4.200" ry="1.700" transform="rotate(32 1072.300 112.200)" fill="#a9b56c"/><circle cx="1078.4" cy="81" r="1.700" fill="#acdfe5" opacity=".9"/><circle cx="1082" cy="79.5" r="1.700" fill="#acdfe5" opacity=".9"/><circle cx="1086.8" cy="81" r="1.700" fill="#acdfe5" opacity=".9"/><circle cx="1082.4" cy="83.3" r="1.700" fill="#acdfe5" opacity=".9"/><circle cx="1087.6" cy="85.4" r="1.700" fill="#acdfe5" opacity=".9"/><circle cx="1076.6" cy="86.1" r="1.700" fill="#acdfe5" opacity=".9"/><circle cx="1081.3" cy="86.8" r="1.700" fill="#acdfe5" opacity=".9"/><path d="M1078.500 89.500l4 6.500M1083.800 89.300l.8 5.800M1082.800 95.500l3-5" stroke="#c3cb9c" stroke-width=".7" fill="none"/><circle cx="1116.6" cy="85.7" r=".8" fill="#acdfe5"/><circle cx="1119.9" cy="85.7" r=".8" fill="#acdfe5"/><circle cx="1114.4" cy="88.7" r=".8" fill="#acdfe5"/><circle cx="1117.7" cy="88.3" r=".8" fill="#acdfe5"/><circle cx="1121.0" cy="89.1" r=".8" fill="#acdfe5"/><circle cx="1113.6" cy="91.6" r=".8" fill="#acdfe5"/><circle cx="1115.8" cy="91.3" r=".8" fill="#acdfe5"/><circle cx="1118.4" cy="91.6" r=".8" fill="#acdfe5"/><circle cx="1116.6" cy="94.2" r=".8" fill="#acdfe5"/><ellipse cx="1066.300" cy="85.600" rx="3.400" ry="2.200" transform="rotate(28 1066.300 85.600)" fill="#a9b56c" opacity=".9"/><ellipse cx="1064.300" cy="84" rx="1.600" ry="1" transform="rotate(20 1064.300 84)" fill="#a9b56c"/><ellipse cx="1109.7" cy="106.3" rx="1.8" ry="1.4" transform="rotate(30 1109.7 106.3)" fill="#f8b8a6" opacity="0.9"/><ellipse cx="1107.9" cy="107.6" rx="1.9" ry="1.4" transform="rotate(89 1107.9 107.6)" fill="#f8b8a6" opacity="0.9"/><ellipse cx="1105.9" cy="106.4" rx="1.8" ry="1.4" transform="rotate(147 1105.9 106.4)" fill="#f8b8a6" opacity="0.9"/><ellipse cx="1105.9" cy="104.1" rx="1.8" ry="1.4" transform="rotate(-150 1105.9 104.1)" fill="#f8b8a6" opacity="0.9"/><ellipse cx="1107.7" cy="102.8" rx="1.9" ry="1.4" transform="rotate(-91 1107.7 102.8)" fill="#f8b8a6" opacity="0.9"/><ellipse cx="1109.7" cy="104.0" rx="1.8" ry="1.4" transform="rotate(-33 1109.7 104.0)" fill="#f8b8a6" opacity="0.9"/><circle cx="1107.800" cy="105.200" r="1.300" fill="#f4a08c"/><path d="M1108.900 109.500l.8 11.500" stroke="#a9b56c" stroke-width=".7" fill="none" opacity=".8"/><ellipse cx="1111.300" cy="112.500" rx=".9" ry="4.800" transform="rotate(15 1111.300 112.500)" fill="#a9b56c" opacity=".85"/><path d="M1098.600 112.200l7 8" stroke="#a9b56c" stroke-width=".6" opacity=".7"/><ellipse cx="1099.3" cy="112.8" rx="1.600" ry=".8" transform="rotate(35 1099.3 112.8)" fill="#a9b56c" opacity=".8"/><ellipse cx="1101.2" cy="114.6" rx="1.600" ry=".8" transform="rotate(35 1101.2 114.6)" fill="#a9b56c" opacity=".8"/><ellipse cx="1103" cy="116.8" rx="1.600" ry=".8" transform="rotate(35 1103 116.8)" fill="#a9b56c" opacity=".8"/><ellipse cx="1100.2" cy="115.6" rx="1.600" ry=".8" transform="rotate(35 1100.2 115.6)" fill="#a9b56c" opacity=".8"/><ellipse cx="1104.2" cy="115.8" rx="1.600" ry=".8" transform="rotate(35 1104.2 115.8)" fill="#a9b56c" opacity=".8"/><ellipse cx="1102.3" cy="118.2" rx="1.600" ry=".8" transform="rotate(35 1102.3 118.2)" fill="#a9b56c" opacity=".8"/><circle cx="1088.7" cy="118" r="2.200" fill="#f8b8a6"/><circle cx="1084.6" cy="121.7" r="2.200" fill="#f8b8a6"/><circle cx="1089.8" cy="123.2" r="2.200" fill="#f8b8a6"/><circle cx="1095.6" cy="124.3" r="2.200" fill="#f8b8a6"/><circle cx="1085.7" cy="127.2" r="2.200" fill="#f8b8a6"/><ellipse cx="1084.6" cy="117.3" rx="1.200" ry=".8" transform="rotate(40 1084.6 117.3)" fill="#a9b56c"/><ellipse cx="1092.3" cy="120.3" rx="1.200" ry=".8" transform="rotate(40 1092.3 120.3)" fill="#a9b56c"/><ellipse cx="1082.8" cy="123.9" rx="1.200" ry=".8" transform="rotate(40 1082.8 123.9)" fill="#a9b56c"/><ellipse cx="1091.2" cy="126.9" rx="1.200" ry=".8" transform="rotate(40 1091.2 126.9)" fill="#a9b56c"/><ellipse cx="1094.5" cy="128.7" rx="1.200" ry=".8" transform="rotate(40 1094.5 128.7)" fill="#a9b56c"/><path d="M1057 112.500l5.500 4.500M1059 111.500l1.500 4M1057 115.300l4.500 1.200M1061.500 113l.8 4" stroke="#f6dcb4" stroke-width=".8" fill="none"/></g>
<g transform="translate(-1120 0)"><ellipse cx="1108.5" cy="83.7" rx="4.5" ry="2.6" transform="rotate(4 1108.5 83.7)" fill="#fbb128" opacity="0.92"/><ellipse cx="1107.3" cy="85.8" rx="4.1" ry="2.3" transform="rotate(30 1107.3 85.8)" fill="#fbb128" opacity="0.92"/><ellipse cx="1104.8" cy="87.1" rx="3.5" ry="2.0" transform="rotate(65 1104.8 87.1)" fill="#fbb128" opacity="0.92"/><ellipse cx="1101.7" cy="87.2" rx="3.4" ry="1.9" transform="rotate(109 1101.7 87.2)" fill="#fbb128" opacity="0.92"/><ellipse cx="1099.0" cy="86.1" rx="4.0" ry="2.3" transform="rotate(146 1099.0 86.1)" fill="#fbb128" opacity="0.92"/><ellipse cx="1097.6" cy="84.0" rx="4.5" ry="2.6" transform="rotate(172 1097.6 84.0)" fill="#fbb128" opacity="0.92"/><ellipse cx="1097.9" cy="81.8" rx="4.4" ry="2.5" transform="rotate(-164 1097.9 81.8)" fill="#fbb128" opacity="0.92"/><ellipse cx="1099.8" cy="80.0" rx="3.8" ry="2.1" transform="rotate(-134 1099.8 80.0)" fill="#fbb128" opacity="0.92"/><ellipse cx="1102.8" cy="79.3" rx="3.3" ry="1.9" transform="rotate(-93 1102.8 79.3)" fill="#fbb128" opacity="0.92"/><ellipse cx="1105.8" cy="79.8" rx="3.7" ry="2.1" transform="rotate(-51 1105.8 79.8)" fill="#fbb128" opacity="0.92"/><ellipse cx="1107.9" cy="81.5" rx="4.3" ry="2.4" transform="rotate(-20 1107.9 81.5)" fill="#fbb128" opacity="0.92"/><ellipse cx="1103" cy="83.300" rx="5" ry="3.800" fill="#fbb128"/><path d="M1099.300 80.800l6.500 1-1.800 3.600z" fill="#b7b866"/><ellipse cx="1095.700" cy="91.600" rx="1.800" ry="4" transform="rotate(-28 1095.700 91.600)" fill="#a9b56c"/><ellipse cx="1101" cy="95.400" rx="1.700" ry="4" transform="rotate(45 1101 95.400)" fill="#a9b56c"/><ellipse cx="1128.3" cy="101.4" rx="3.4" ry="2.0" transform="rotate(14 1128.3 101.4)" fill="#fbb128" opacity="0.92"/><ellipse cx="1126.8" cy="103.0" rx="3.0" ry="1.8" transform="rotate(46 1126.8 103.0)" fill="#fbb128" opacity="0.92"/><ellipse cx="1124.4" cy="103.7" rx="2.7" ry="1.6" transform="rotate(89 1124.4 103.7)" fill="#fbb128" opacity="0.92"/><ellipse cx="1121.9" cy="103.1" rx="3.0" ry="1.7" transform="rotate(132 1121.9 103.1)" fill="#fbb128" opacity="0.92"/><ellipse cx="1120.3" cy="101.5" rx="3.4" ry="2.0" transform="rotate(165 1120.3 101.5)" fill="#fbb128" opacity="0.92"/><ellipse cx="1120.3" cy="99.4" rx="3.4" ry="2.0" transform="rotate(-166 1120.3 99.4)" fill="#fbb128" opacity="0.92"/><ellipse cx="1121.8" cy="97.8" rx="3.0" ry="1.8" transform="rotate(-134 1121.8 97.8)" fill="#fbb128" opacity="0.92"/><ellipse cx="1124.2" cy="97.1" rx="2.7" ry="1.6" transform="rotate(-91 1124.2 97.1)" fill="#fbb128" opacity="0.92"/><ellipse cx="1126.7" cy="97.7" rx="3.0" ry="1.7" transform="rotate(-48 1126.7 97.7)" fill="#fbb128" opacity="0.92"/><ellipse cx="1128.3" cy="99.3" rx="3.4" ry="2.0" transform="rotate(-15 1128.3 99.3)" fill="#fbb128" opacity="0.92"/><ellipse cx="1124.300" cy="100.400" rx="3.800" ry="3" fill="#fbb128"/><ellipse cx="1124.200" cy="101.300" rx="1.500" ry="1.200" fill="#b7b866"/><path d="M1121.300 105c-1.300 3.800-2.700 7.800-3.600 11.600" stroke="#a9b56c" stroke-width=".8" fill="none" opacity=".85"/><ellipse cx="1124.600" cy="111.100" rx="4" ry="1.900" transform="rotate(-12 1124.600 111.100)" fill="#a9b56c"/><ellipse cx="1073.3" cy="102.6" rx="3.8" ry="2.2" transform="rotate(10 1073.3 102.6)" fill="#acdfe5" opacity="0.9"/><ellipse cx="1071.8" cy="104.9" rx="3.6" ry="2.1" transform="rotate(45 1071.8 104.9)" fill="#acdfe5" opacity="0.9"/><ellipse cx="1069.2" cy="106.0" rx="3.5" ry="2.0" transform="rotate(83 1069.2 106.0)" fill="#acdfe5" opacity="0.9"/><ellipse cx="1066.4" cy="105.5" rx="3.5" ry="2.1" transform="rotate(122 1066.4 105.5)" fill="#acdfe5" opacity="0.9"/><ellipse cx="1064.5" cy="103.5" rx="3.8" ry="2.2" transform="rotate(158 1064.5 103.5)" fill="#acdfe5" opacity="0.9"/><ellipse cx="1064.1" cy="101.0" rx="3.8" ry="2.2" transform="rotate(-170 1064.1 101.0)" fill="#acdfe5" opacity="0.9"/><ellipse cx="1065.6" cy="98.7" rx="3.6" ry="2.1" transform="rotate(-135 1065.6 98.7)" fill="#acdfe5" opacity="0.9"/><ellipse cx="1068.2" cy="97.6" rx="3.5" ry="2.0" transform="rotate(-97 1068.2 97.6)" fill="#acdfe5" opacity="0.9"/><ellipse cx="1071.0" cy="98.1" rx="3.5" ry="2.1" transform="rotate(-58 1071.0 98.1)" fill="#acdfe5" opacity="0.9"/><ellipse cx="1072.9" cy="100.1" rx="3.8" ry="2.2" transform="rotate(-22 1072.9 100.1)" fill="#acdfe5" opacity="0.9"/><ellipse cx="1068.200" cy="100.800" rx="4.600" ry="3.600" transform="rotate(-25 1068.200 100.800)" fill="#79c4d3" opacity=".85"/><path d="M1066 102.600l4.800-1.800-1.300 2.600z" fill="#b0bb6e"/><path d="M1071 106.500l4 7.500" stroke="#a9b56c" stroke-width=".7" opacity=".8"/><ellipse cx="1077.700" cy="107" rx="2.200" ry="4" transform="rotate(22 1077.700 107)" fill="#a9b56c"/><ellipse cx="1072.300" cy="112.200" rx="4.200" ry="1.700" transform="rotate(32 1072.300 112.200)" fill="#a9b56c"/><circle cx="1078.4" cy="81" r="1.700" fill="#acdfe5" opacity=".9"/><circle cx="1082" cy="79.5" r="1.700" fill="#acdfe5" opacity=".9"/><circle cx="1086.8" cy="81" r="1.700" fill="#acdfe5" opacity=".9"/><circle cx="1082.4" cy="83.3" r="1.700" fill="#acdfe5" opacity=".9"/><circle cx="1087.6" cy="85.4" r="1.700" fill="#acdfe5" opacity=".9"/><circle cx="1076.6" cy="86.1" r="1.700" fill="#acdfe5" opacity=".9"/><circle cx="1081.3" cy="86.8" r="1.700" fill="#acdfe5" opacity=".9"/><path d="M1078.500 89.500l4 6.500M1083.800 89.300l.8 5.800M1082.800 95.500l3-5" stroke="#c3cb9c" stroke-width=".7" fill="none"/><circle cx="1116.6" cy="85.7" r=".8" fill="#acdfe5"/><circle cx="1119.9" cy="85.7" r=".8" fill="#acdfe5"/><circle cx="1114.4" cy="88.7" r=".8" fill="#acdfe5"/><circle cx="1117.7" cy="88.3" r=".8" fill="#acdfe5"/><circle cx="1121.0" cy="89.1" r=".8" fill="#acdfe5"/><circle cx="1113.6" cy="91.6" r=".8" fill="#acdfe5"/><circle cx="1115.8" cy="91.3" r=".8" fill="#acdfe5"/><circle cx="1118.4" cy="91.6" r=".8" fill="#acdfe5"/><circle cx="1116.6" cy="94.2" r=".8" fill="#acdfe5"/><ellipse cx="1066.300" cy="85.600" rx="3.400" ry="2.200" transform="rotate(28 1066.300 85.600)" fill="#a9b56c" opacity=".9"/><ellipse cx="1064.300" cy="84" rx="1.600" ry="1" transform="rotate(20 1064.300 84)" fill="#a9b56c"/><ellipse cx="1109.7" cy="106.3" rx="1.8" ry="1.4" transform="rotate(30 1109.7 106.3)" fill="#f8b8a6" opacity="0.9"/><ellipse cx="1107.9" cy="107.6" rx="1.9" ry="1.4" transform="rotate(89 1107.9 107.6)" fill="#f8b8a6" opacity="0.9"/><ellipse cx="1105.9" cy="106.4" rx="1.8" ry="1.4" transform="rotate(147 1105.9 106.4)" fill="#f8b8a6" opacity="0.9"/><ellipse cx="1105.9" cy="104.1" rx="1.8" ry="1.4" transform="rotate(-150 1105.9 104.1)" fill="#f8b8a6" opacity="0.9"/><ellipse cx="1107.7" cy="102.8" rx="1.9" ry="1.4" transform="rotate(-91 1107.7 102.8)" fill="#f8b8a6" opacity="0.9"/><ellipse cx="1109.7" cy="104.0" rx="1.8" ry="1.4" transform="rotate(-33 1109.7 104.0)" fill="#f8b8a6" opacity="0.9"/><circle cx="1107.800" cy="105.200" r="1.300" fill="#f4a08c"/><path d="M1108.900 109.500l.8 11.500" stroke="#a9b56c" stroke-width=".7" fill="none" opacity=".8"/><ellipse cx="1111.300" cy="112.500" rx=".9" ry="4.800" transform="rotate(15 1111.300 112.500)" fill="#a9b56c" opacity=".85"/><path d="M1098.600 112.200l7 8" stroke="#a9b56c" stroke-width=".6" opacity=".7"/><ellipse cx="1099.3" cy="112.8" rx="1.600" ry=".8" transform="rotate(35 1099.3 112.8)" fill="#a9b56c" opacity=".8"/><ellipse cx="1101.2" cy="114.6" rx="1.600" ry=".8" transform="rotate(35 1101.2 114.6)" fill="#a9b56c" opacity=".8"/><ellipse cx="1103" cy="116.8" rx="1.600" ry=".8" transform="rotate(35 1103 116.8)" fill="#a9b56c" opacity=".8"/><ellipse cx="1100.2" cy="115.6" rx="1.600" ry=".8" transform="rotate(35 1100.2 115.6)" fill="#a9b56c" opacity=".8"/><ellipse cx="1104.2" cy="115.8" rx="1.600" ry=".8" transform="rotate(35 1104.2 115.8)" fill="#a9b56c" opacity=".8"/><ellipse cx="1102.3" cy="118.2" rx="1.600" ry=".8" transform="rotate(35 1102.3 118.2)" fill="#a9b56c" opacity=".8"/><circle cx="1088.7" cy="118" r="2.200" fill="#f8b8a6"/><circle cx="1084.6" cy="121.7" r="2.200" fill="#f8b8a6"/><circle cx="1089.8" cy="123.2" r="2.200" fill="#f8b8a6"/><circle cx="1095.6" cy="124.3" r="2.200" fill="#f8b8a6"/><circle cx="1085.7" cy="127.2" r="2.200" fill="#f8b8a6"/><ellipse cx="1084.6" cy="117.3" rx="1.200" ry=".8" transform="rotate(40 1084.6 117.3)" fill="#a9b56c"/><ellipse cx="1092.3" cy="120.3" rx="1.200" ry=".8" transform="rotate(40 1092.3 120.3)" fill="#a9b56c"/><ellipse cx="1082.8" cy="123.9" rx="1.200" ry=".8" transform="rotate(40 1082.8 123.9)" fill="#a9b56c"/><ellipse cx="1091.2" cy="126.9" rx="1.200" ry=".8" transform="rotate(40 1091.2 126.9)" fill="#a9b56c"/><ellipse cx="1094.5" cy="128.7" rx="1.200" ry=".8" transform="rotate(40 1094.5 128.7)" fill="#a9b56c"/><path d="M1057 112.500l5.500 4.500M1059 111.500l1.500 4M1057 115.300l4.500 1.200M1061.500 113l.8 4" stroke="#f6dcb4" stroke-width=".8" fill="none"/></g>
<g transform="translate(-1040 0)"><ellipse cx="1108.5" cy="83.7" rx="4.5" ry="2.6" transform="rotate(4 1108.5 83.7)" fill="#fbb128" opacity="0.92"/><ellipse cx="1107.3" cy="85.8" rx="4.1" ry="2.3" transform="rotate(30 1107.3 85.8)" fill="#fbb128" opacity="0.92"/><ellipse cx="1104.8" cy="87.1" rx="3.5" ry="2.0" transform="rotate(65 1104.8 87.1)" fill="#fbb128" opacity="0.92"/><ellipse cx="1101.7" cy="87.2" rx="3.4" ry="1.9" transform="rotate(109 1101.7 87.2)" fill="#fbb128" opacity="0.92"/><ellipse cx="1099.0" cy="86.1" rx="4.0" ry="2.3" transform="rotate(146 1099.0 86.1)" fill="#fbb128" opacity="0.92"/><ellipse cx="1097.6" cy="84.0" rx="4.5" ry="2.6" transform="rotate(172 1097.6 84.0)" fill="#fbb128" opacity="0.92"/><ellipse cx="1097.9" cy="81.8" rx="4.4" ry="2.5" transform="rotate(-164 1097.9 81.8)" fill="#fbb128" opacity="0.92"/><ellipse cx="1099.8" cy="80.0" rx="3.8" ry="2.1" transform="rotate(-134 1099.8 80.0)" fill="#fbb128" opacity="0.92"/><ellipse cx="1102.8" cy="79.3" rx="3.3" ry="1.9" transform="rotate(-93 1102.8 79.3)" fill="#fbb128" opacity="0.92"/><ellipse cx="1105.8" cy="79.8" rx="3.7" ry="2.1" transform="rotate(-51 1105.8 79.8)" fill="#fbb128" opacity="0.92"/><ellipse cx="1107.9" cy="81.5" rx="4.3" ry="2.4" transform="rotate(-20 1107.9 81.5)" fill="#fbb128" opacity="0.92"/><ellipse cx="1103" cy="83.300" rx="5" ry="3.800" fill="#fbb128"/><path d="M1099.300 80.800l6.500 1-1.800 3.600z" fill="#b7b866"/><ellipse cx="1095.700" cy="91.600" rx="1.800" ry="4" transform="rotate(-28 1095.700 91.600)" fill="#a9b56c"/><ellipse cx="1101" cy="95.400" rx="1.700" ry="4" transform="rotate(45 1101 95.400)" fill="#a9b56c"/><ellipse cx="1128.3" cy="101.4" rx="3.4" ry="2.0" transform="rotate(14 1128.3 101.4)" fill="#fbb128" opacity="0.92"/><ellipse cx="1126.8" cy="103.0" rx="3.0" ry="1.8" transform="rotate(46 1126.8 103.0)" fill="#fbb128" opacity="0.92"/><ellipse cx="1124.4" cy="103.7" rx="2.7" ry="1.6" transform="rotate(89 1124.4 103.7)" fill="#fbb128" opacity="0.92"/><ellipse cx="1121.9" cy="103.1" rx="3.0" ry="1.7" transform="rotate(132 1121.9 103.1)" fill="#fbb128" opacity="0.92"/><ellipse cx="1120.3" cy="101.5" rx="3.4" ry="2.0" transform="rotate(165 1120.3 101.5)" fill="#fbb128" opacity="0.92"/><ellipse cx="1120.3" cy="99.4" rx="3.4" ry="2.0" transform="rotate(-166 1120.3 99.4)" fill="#fbb128" opacity="0.92"/><ellipse cx="1121.8" cy="97.8" rx="3.0" ry="1.8" transform="rotate(-134 1121.8 97.8)" fill="#fbb128" opacity="0.92"/><ellipse cx="1124.2" cy="97.1" rx="2.7" ry="1.6" transform="rotate(-91 1124.2 97.1)" fill="#fbb128" opacity="0.92"/><ellipse cx="1126.7" cy="97.7" rx="3.0" ry="1.7" transform="rotate(-48 1126.7 97.7)" fill="#fbb128" opacity="0.92"/><ellipse cx="1128.3" cy="99.3" rx="3.4" ry="2.0" transform="rotate(-15 1128.3 99.3)" fill="#fbb128" opacity="0.92"/><ellipse cx="1124.300" cy="100.400" rx="3.800" ry="3" fill="#fbb128"/><ellipse cx="1124.200" cy="101.300" rx="1.500" ry="1.200" fill="#b7b866"/><path d="M1121.300 105c-1.300 3.800-2.700 7.800-3.600 11.600" stroke="#a9b56c" stroke-width=".8" fill="none" opacity=".85"/><ellipse cx="1124.600" cy="111.100" rx="4" ry="1.900" transform="rotate(-12 1124.600 111.100)" fill="#a9b56c"/><ellipse cx="1073.3" cy="102.6" rx="3.8" ry="2.2" transform="rotate(10 1073.3 102.6)" fill="#acdfe5" opacity="0.9"/><ellipse cx="1071.8" cy="104.9" rx="3.6" ry="2.1" transform="rotate(45 1071.8 104.9)" fill="#acdfe5" opacity="0.9"/><ellipse cx="1069.2" cy="106.0" rx="3.5" ry="2.0" transform="rotate(83 1069.2 106.0)" fill="#acdfe5" opacity="0.9"/><ellipse cx="1066.4" cy="105.5" rx="3.5" ry="2.1" transform="rotate(122 1066.4 105.5)" fill="#acdfe5" opacity="0.9"/><ellipse cx="1064.5" cy="103.5" rx="3.8" ry="2.2" transform="rotate(158 1064.5 103.5)" fill="#acdfe5" opacity="0.9"/><ellipse cx="1064.1" cy="101.0" rx="3.8" ry="2.2" transform="rotate(-170 1064.1 101.0)" fill="#acdfe5" opacity="0.9"/><ellipse cx="1065.6" cy="98.7" rx="3.6" ry="2.1" transform="rotate(-135 1065.6 98.7)" fill="#acdfe5" opacity="0.9"/><ellipse cx="1068.2" cy="97.6" rx="3.5" ry="2.0" transform="rotate(-97 1068.2 97.6)" fill="#acdfe5" opacity="0.9"/><ellipse cx="1071.0" cy="98.1" rx="3.5" ry="2.1" transform="rotate(-58 1071.0 98.1)" fill="#acdfe5" opacity="0.9"/><ellipse cx="1072.9" cy="100.1" rx="3.8" ry="2.2" transform="rotate(-22 1072.9 100.1)" fill="#acdfe5" opacity="0.9"/><ellipse cx="1068.200" cy="100.800" rx="4.600" ry="3.600" transform="rotate(-25 1068.200 100.800)" fill="#79c4d3" opacity=".85"/><path d="M1066 102.600l4.800-1.800-1.300 2.600z" fill="#b0bb6e"/><path d="M1071 106.500l4 7.500" stroke="#a9b56c" stroke-width=".7" opacity=".8"/><ellipse cx="1077.700" cy="107" rx="2.200" ry="4" transform="rotate(22 1077.700 107)" fill="#a9b56c"/><ellipse cx="1072.300" cy="112.200" rx="4.200" ry="1.700" transform="rotate(32 1072.300 112.200)" fill="#a9b56c"/><circle cx="1078.4" cy="81" r="1.700" fill="#acdfe5" opacity=".9"/><circle cx="1082" cy="79.5" r="1.700" fill="#acdfe5" opacity=".9"/><circle cx="1086.8" cy="81" r="1.700" fill="#acdfe5" opacity=".9"/><circle cx="1082.4" cy="83.3" r="1.700" fill="#acdfe5" opacity=".9"/><circle cx="1087.6" cy="85.4" r="1.700" fill="#acdfe5" opacity=".9"/><circle cx="1076.6" cy="86.1" r="1.700" fill="#acdfe5" opacity=".9"/><circle cx="1081.3" cy="86.8" r="1.700" fill="#acdfe5" opacity=".9"/><path d="M1078.500 89.500l4 6.500M1083.800 89.300l.8 5.800M1082.800 95.500l3-5" stroke="#c3cb9c" stroke-width=".7" fill="none"/><circle cx="1116.6" cy="85.7" r=".8" fill="#acdfe5"/><circle cx="1119.9" cy="85.7" r=".8" fill="#acdfe5"/><circle cx="1114.4" cy="88.7" r=".8" fill="#acdfe5"/><circle cx="1117.7" cy="88.3" r=".8" fill="#acdfe5"/><circle cx="1121.0" cy="89.1" r=".8" fill="#acdfe5"/><circle cx="1113.6" cy="91.6" r=".8" fill="#acdfe5"/><circle cx="1115.8" cy="91.3" r=".8" fill="#acdfe5"/><circle cx="1118.4" cy="91.6" r=".8" fill="#acdfe5"/><circle cx="1116.6" cy="94.2" r=".8" fill="#acdfe5"/><ellipse cx="1066.300" cy="85.600" rx="3.400" ry="2.200" transform="rotate(28 1066.300 85.600)" fill="#a9b56c" opacity=".9"/><ellipse cx="1064.300" cy="84" rx="1.600" ry="1" transform="rotate(20 1064.300 84)" fill="#a9b56c"/><ellipse cx="1109.7" cy="106.3" rx="1.8" ry="1.4" transform="rotate(30 1109.7 106.3)" fill="#f8b8a6" opacity="0.9"/><ellipse cx="1107.9" cy="107.6" rx="1.9" ry="1.4" transform="rotate(89 1107.9 107.6)" fill="#f8b8a6" opacity="0.9"/><ellipse cx="1105.9" cy="106.4" rx="1.8" ry="1.4" transform="rotate(147 1105.9 106.4)" fill="#f8b8a6" opacity="0.9"/><ellipse cx="1105.9" cy="104.1" rx="1.8" ry="1.4" transform="rotate(-150 1105.9 104.1)" fill="#f8b8a6" opacity="0.9"/><ellipse cx="1107.7" cy="102.8" rx="1.9" ry="1.4" transform="rotate(-91 1107.7 102.8)" fill="#f8b8a6" opacity="0.9"/><ellipse cx="1109.7" cy="104.0" rx="1.8" ry="1.4" transform="rotate(-33 1109.7 104.0)" fill="#f8b8a6" opacity="0.9"/><circle cx="1107.800" cy="105.200" r="1.300" fill="#f4a08c"/><path d="M1108.900 109.500l.8 11.500" stroke="#a9b56c" stroke-width=".7" fill="none" opacity=".8"/><ellipse cx="1111.300" cy="112.500" rx=".9" ry="4.800" transform="rotate(15 1111.300 112.500)" fill="#a9b56c" opacity=".85"/><path d="M1098.600 112.200l7 8" stroke="#a9b56c" stroke-width=".6" opacity=".7"/><ellipse cx="1099.3" cy="112.8" rx="1.600" ry=".8" transform="rotate(35 1099.3 112.8)" fill="#a9b56c" opacity=".8"/><ellipse cx="1101.2" cy="114.6" rx="1.600" ry=".8" transform="rotate(35 1101.2 114.6)" fill="#a9b56c" opacity=".8"/><ellipse cx="1103" cy="116.8" rx="1.600" ry=".8" transform="rotate(35 1103 116.8)" fill="#a9b56c" opacity=".8"/><ellipse cx="1100.2" cy="115.6" rx="1.600" ry=".8" transform="rotate(35 1100.2 115.6)" fill="#a9b56c" opacity=".8"/><ellipse cx="1104.2" cy="115.8" rx="1.600" ry=".8" transform="rotate(35 1104.2 115.8)" fill="#a9b56c" opacity=".8"/><ellipse cx="1102.3" cy="118.2" rx="1.600" ry=".8" transform="rotate(35 1102.3 118.2)" fill="#a9b56c" opacity=".8"/><circle cx="1088.7" cy="118" r="2.200" fill="#f8b8a6"/><circle cx="1084.6" cy="121.7" r="2.200" fill="#f8b8a6"/><circle cx="1089.8" cy="123.2" r="2.200" fill="#f8b8a6"/><circle cx="1095.6" cy="124.3" r="2.200" fill="#f8b8a6"/><circle cx="1085.7" cy="127.2" r="2.200" fill="#f8b8a6"/><ellipse cx="1084.6" cy="117.3" rx="1.200" ry=".8" transform="rotate(40 1084.6 117.3)" fill="#a9b56c"/><ellipse cx="1092.3" cy="120.3" rx="1.200" ry=".8" transform="rotate(40 1092.3 120.3)" fill="#a9b56c"/><ellipse cx="1082.8" cy="123.9" rx="1.200" ry=".8" transform="rotate(40 1082.8 123.9)" fill="#a9b56c"/><ellipse cx="1091.2" cy="126.9" rx="1.200" ry=".8" transform="rotate(40 1091.2 126.9)" fill="#a9b56c"/><ellipse cx="1094.5" cy="128.7" rx="1.200" ry=".8" transform="rotate(40 1094.5 128.7)" fill="#a9b56c"/><path d="M1057 112.500l5.500 4.500M1059 111.500l1.500 4M1057 115.300l4.500 1.200M1061.500 113l.8 4" stroke="#f6dcb4" stroke-width=".8" fill="none"/></g>
</pattern></defs>
<rect x="1056.400" y="75" width="160" height="1" fill="#303030"/>
<rect x="1056.400" y="76" width="160" height="188.200" fill="#f3efe8"/>
<rect x="1056.400" y="76" width="160" height="188.200" fill="url(#pat)"/>
<rect x="1092.500" y="139.200" width="33.600" height="22.600" fill="none" stroke="#3d7dc3" stroke-width="1.300"/>
<rect x="1082" y="288.600" width="66" height="1.200" rx=".6" fill="#cfcfcf"/><rect x="1082" y="288.500" width="33" height="1.400" rx=".7" fill="#2d86ea"/><circle cx="1115.400" cy="289.100" r="3.700" fill="#2d86ea"/>
</svg>
<div class="t" style="left:1154.700px;top:282.900px;font-size:8.600px;letter-spacing:-.1px">128.14%</div>
<div class="hl" style="left:1056.400px;top:297.200px;width:160px;height:1.300px"></div>
<div class="hl" style="left:1056.400px;top:317px;width:160px"></div>
<div class="tab jp" style="left:1056.400px;top:301.600px;width:46.600px;height:16px;line-height:13.500px;font-size:8px">レイヤー</div>
<div class="box" style="left:1057.300px;top:320.200px;width:69.300px;height:13.200px"></div>
<div class="t jp" style="left:1061px;top:319.800px;font-size:8px">通常</div>
<svg class="a" style="left:1114px;top:322.500px" width="10" height="9" viewBox="0 0 10 9"><path d="M2 3.200l2.600 2.600 2.600-2.600" fill="none" stroke="#444" stroke-width="0.800"/></svg>
<div class="a" style="left:1134px;top:326.100px;width:36px;height:1.400px;background:#2d86ea;border-radius:1px"></div>
<div class="a" style="left:1167px;top:323.100px;width:7.400px;height:7.400px;border-radius:50%;background:#2d86ea"></div>
<div class="a" style="left:1179.3px;top:320.2px;width:36.2px;height:13.2px;background:#fff;border:1px solid #d2d2d2;border-radius:2px"></div><div class="a" style="left:1202.5px;top:321.2px;width:1px;height:11.2px;background:#dadada"></div><div class="t" style="left:1179.3px;top:321.6px;width:20.7px;text-align:right;color:#111;font-size:8.2px">100</div><svg class="a" style="left:1205.0px;top:321.8px" width="8" height="10" viewBox="0 0 8 10"><path d="M1.300 3.900l2.700-2.500 2.700 2.500M1.300 6.100l2.700 2.500 2.700-2.500" fill="none" stroke="#777" stroke-width="0.75"/></svg>
<div class="a" style="left:1056.400px;top:336.500px;width:160px;height:464.800px;background:#999"></div>
<div class="lay" style="top:336.80px;background:#fff"><svg class="a" style="left:0px;top:.6px" width="34" height="11" viewBox="0 0 34 11"><ellipse cx="5.700" cy="5.800" rx="3" ry="2.600" fill="none" stroke="#111" stroke-width="1.200"/><path d="M2 2.800l1.400 1.200M5.700 1.600v1.500M9.400 2.800l-1.400 1.200" stroke="#111" stroke-width="1"/><rect x="12.800" y=".8" width="8.600" height="6.600" fill="#111"/><path d="M17.100 2v4.200M15.900 3.300h2.400" stroke="#fff" stroke-width=".9"/><path d="M12.800 9.300h2M16.100 9.300h2M19.400 9.300h2" stroke="#111" stroke-width="1.400"/><path d="M22.200 2.600c1.500-1.600 3.800-1.800 5.400-.4" stroke="#999" stroke-width=".6" fill="none"/><path d="M28.200 1.400l2 2-4.800 4.800-2.700.7.700-2.700z" fill="#111"/><path d="M28.500 9.800c1.200-.3 2-1.100 2.300-2.300" stroke="#888" stroke-width=".6" fill="none"/></svg><div class="t" style="left:31.300px;top:0.400px;font-size:8.400px">8</div></div>
<div class="lay" style="top:349.07px;background:#fff"><svg class="a" style="left:0px;top:.6px" width="34" height="11" viewBox="0 0 34 11"><ellipse cx="5.700" cy="5.800" rx="3" ry="2.600" fill="none" stroke="#111" stroke-width="1.200"/><path d="M2 2.800l1.400 1.200M5.700 1.600v1.500M9.400 2.800l-1.400 1.200" stroke="#111" stroke-width="1"/><rect x="12.800" y=".8" width="8.600" height="6.600" fill="#111"/><path d="M17.100 2v4.200M15.900 3.300h2.400" stroke="#fff" stroke-width=".9"/><path d="M12.800 9.300h2M16.100 9.300h2M19.400 9.300h2" stroke="#111" stroke-width="1.400"/><path d="M22.200 2.600c1.500-1.600 3.800-1.800 5.400-.4" stroke="#999" stroke-width=".6" fill="none"/><path d="M28.200 1.400l2 2-4.800 4.800-2.700.7.700-2.700z" fill="#111"/><path d="M28.500 9.800c1.200-.3 2-1.100 2.300-2.300" stroke="#888" stroke-width=".6" fill="none"/></svg><div class="t" style="left:31.300px;top:0.400px;font-size:8.400px">7</div></div>
<div class="lay" style="top:361.34px;background:#fff"><svg class="a" style="left:0px;top:.6px" width="34" height="11" viewBox="0 0 34 11"><ellipse cx="5.700" cy="5.800" rx="3" ry="2.600" fill="none" stroke="#111" stroke-width="1.200"/><path d="M2 2.800l1.400 1.200M5.700 1.600v1.500M9.400 2.800l-1.400 1.200" stroke="#111" stroke-width="1"/><rect x="12.800" y=".8" width="8.600" height="6.600" fill="#111"/><path d="M17.100 2v4.200M15.900 3.300h2.400" stroke="#fff" stroke-width=".9"/><path d="M12.800 9.300h2M16.100 9.300h2M19.400 9.300h2" stroke="#111" stroke-width="1.400"/><path d="M22.200 2.600c1.500-1.600 3.800-1.800 5.400-.4" stroke="#999" stroke-width=".6" fill="none"/><path d="M28.200 1.400l2 2-4.800 4.800-2.700.7.700-2.700z" fill="#111"/><path d="M28.500 9.800c1.200-.3 2-1.100 2.300-2.300" stroke="#888" stroke-width=".6" fill="none"/></svg><div class="t" style="left:31.300px;top:0.400px;font-size:8.400px">6</div></div>
<div class="lay" style="top:373.61px;background:#fff"><svg class="a" style="left:0px;top:.6px" width="34" height="11" viewBox="0 0 34 11"><ellipse cx="5.700" cy="5.800" rx="3" ry="2.600" fill="none" stroke="#111" stroke-width="1.200"/><path d="M2 2.800l1.400 1.200M5.700 1.600v1.500M9.400 2.800l-1.400 1.200" stroke="#111" stroke-width="1"/><rect x="12.800" y=".8" width="8.600" height="6.600" fill="#111"/><path d="M17.100 2v4.200M15.900 3.300h2.400" stroke="#fff" stroke-width=".9"/><path d="M12.800 9.300h2M16.100 9.300h2M19.400 9.300h2" stroke="#111" stroke-width="1.400"/><path d="M22.200 2.600c1.500-1.600 3.800-1.800 5.400-.4" stroke="#999" stroke-width=".6" fill="none"/><path d="M28.200 1.400l2 2-4.800 4.800-2.700.7.700-2.700z" fill="#111"/><path d="M28.500 9.800c1.200-.3 2-1.100 2.300-2.300" stroke="#888" stroke-width=".6" fill="none"/></svg><div class="t" style="left:31.300px;top:0.400px;font-size:8.400px">5</div></div>
<div class="lay" style="top:385.88px;background:#fff"><svg class="a" style="left:0px;top:.6px" width="34" height="11" viewBox="0 0 34 11"><ellipse cx="5.700" cy="5.800" rx="3" ry="2.600" fill="none" stroke="#111" stroke-width="1.200"/><path d="M2 2.800l1.400 1.200M5.700 1.600v1.500M9.400 2.800l-1.400 1.200" stroke="#111" stroke-width="1"/><rect x="12.800" y=".8" width="8.600" height="6.600" fill="#111"/><path d="M17.100 2v4.200M15.900 3.300h2.400" stroke="#fff" stroke-width=".9"/><path d="M12.800 9.300h2M16.100 9.300h2M19.400 9.300h2" stroke="#111" stroke-width="1.400"/><path d="M22.200 2.600c1.500-1.600 3.800-1.800 5.400-.4" stroke="#999" stroke-width=".6" fill="none"/><path d="M28.200 1.400l2 2-4.800 4.800-2.700.7.700-2.700z" fill="#111"/><path d="M28.500 9.800c1.200-.3 2-1.100 2.300-2.300" stroke="#888" stroke-width=".6" fill="none"/></svg><div class="t" style="left:31.300px;top:0.400px;font-size:8.400px">4</div></div>
<div class="lay" style="top:398.15px;background:#fff"><svg class="a" style="left:0px;top:.6px" width="34" height="11" viewBox="0 0 34 11"><ellipse cx="5.700" cy="5.800" rx="3" ry="2.600" fill="none" stroke="#111" stroke-width="1.200"/><path d="M2 2.800l1.400 1.200M5.700 1.600v1.500M9.400 2.800l-1.400 1.200" stroke="#111" stroke-width="1"/><rect x="12.800" y=".8" width="8.600" height="6.600" fill="#111"/><path d="M17.100 2v4.200M15.900 3.300h2.400" stroke="#fff" stroke-width=".9"/><path d="M12.800 9.300h2M16.100 9.300h2M19.400 9.300h2" stroke="#111" stroke-width="1.400"/><path d="M22.200 2.600c1.500-1.600 3.800-1.800 5.400-.4" stroke="#999" stroke-width=".6" fill="none"/><path d="M28.200 1.400l2 2-4.800 4.800-2.700.7.700-2.700z" fill="#111"/><path d="M28.500 9.800c1.200-.3 2-1.100 2.300-2.300" stroke="#888" stroke-width=".6" fill="none"/></svg><div class="t" style="left:31.300px;top:0.400px;font-size:8.400px">3</div></div>
<div class="lay" style="top:410.42px;background:#b4d6fd"><svg class="a" style="left:0px;top:.6px" width="34" height="11" viewBox="0 0 34 11"><ellipse cx="5.700" cy="5.800" rx="3" ry="2.600" fill="none" stroke="#111" stroke-width="1.200"/><path d="M2 2.800l1.400 1.200M5.700 1.600v1.500M9.400 2.800l-1.400 1.200" stroke="#111" stroke-width="1"/><rect x="12.800" y=".8" width="8.600" height="6.600" fill="#111"/><path d="M17.100 2v4.200M15.900 3.300h2.400" stroke="#fff" stroke-width=".9"/><path d="M12.800 9.300h2M16.100 9.300h2M19.400 9.300h2" stroke="#111" stroke-width="1.400"/><path d="M22.200 2.600c1.500-1.600 3.800-1.800 5.400-.4" stroke="#999" stroke-width=".6" fill="none"/><path d="M28.200 1.400l2 2-4.800 4.800-2.700.7.700-2.700z" fill="#111"/><path d="M28.500 9.800c1.200-.3 2-1.100 2.300-2.300" stroke="#888" stroke-width=".6" fill="none"/></svg><div class="t" style="left:31.300px;top:0.400px;font-size:8.400px">2</div></div>
<div class="lay" style="top:422.69px;background:#fff"><svg class="a" style="left:0px;top:.6px" width="34" height="11" viewBox="0 0 34 11"><ellipse cx="5.700" cy="5.800" rx="3" ry="2.600" fill="none" stroke="#111" stroke-width="1.200"/><path d="M2 2.800l1.400 1.200M5.700 1.600v1.500M9.400 2.800l-1.400 1.200" stroke="#111" stroke-width="1"/><rect x="12.800" y=".8" width="8.600" height="6.600" fill="#111"/><path d="M17.100 2v4.200M15.900 3.300h2.400" stroke="#fff" stroke-width=".9"/><path d="M12.800 9.300h2M16.100 9.300h2M19.400 9.300h2" stroke="#111" stroke-width="1.400"/><path d="M22.200 2.600c1.500-1.600 3.800-1.800 5.400-.4" stroke="#999" stroke-width=".6" fill="none"/><path d="M28.200 1.400l2 2-4.800 4.800-2.700.7.700-2.700z" fill="#111"/><path d="M28.500 9.800c1.200-.3 2-1.100 2.300-2.300" stroke="#888" stroke-width=".6" fill="none"/></svg><div class="t" style="left:31.300px;top:0.400px;font-size:8.400px">1</div></div>
<svg class="a" style="left:0;top:803.4px" width="1450" height="12" viewBox="0 803.4 1450 12"><path d="M1061.3999999999999 809.4h6.400M1064.6 806.1999999999999v6.400" stroke="#222" stroke-width="1.100"/><path d="M1074.8 809.4h6.400" stroke="#222" stroke-width="1.100"/><path d="M1088.9 811.1999999999999c0-4 5.200-4 5.200 0" stroke="#222" stroke-width="1.600" fill="none"/><rect x="1102" y="808.8" width="6" height="3.800" fill="#222"/><path d="M1103.2 808.9v-1.300c0-2.200 3.600-2.200 3.600 0v1.300" stroke="#222" stroke-width="1" fill="none"/><ellipse cx="1118.6" cy="807.6999999999999" rx="1.500" ry="1.900" fill="none" stroke="#222" stroke-width=".8"/><ellipse cx="1118.6" cy="811.1" rx="1.500" ry="1.900" fill="none" stroke="#222" stroke-width=".8"/><path d="M1129 808.0h6l-3 3.200z" fill="#222"/></svg>
<div class="hl" style="left:1222.700px;top:55.200px;width:224.500px"></div>
<div class="tab jp" style="left:1222.700px;top:39.800px;width:54.700px;height:15.900px;line-height:13.700px;font-size:8px">色相・彩度</div>
<div class="tabi jp" style="left:1277.400px;top:39.800px;width:54.300px;height:15.400px;line-height:14px;font-size:8px">スウォッチ</div>
<div class="tabi jp" style="left:1331.700px;top:39.800px;width:39.300px;height:15.400px;line-height:14px;font-size:8px">近似色</div>
<div class="a" style="left:1224.700px;top:90.500px;width:98px;height:98px;border-radius:50%;background:radial-gradient(circle closest-side,#fff 0%,rgba(255,255,255,.75) 22%,rgba(255,255,255,0) 78%),conic-gradient(from 90deg,#f00,#f0f,#00f,#0ff,#0f0,#ff0,#f00)"></div>
<div class="a" style="left:1261.400px;top:136px;width:5.400px;height:5.400px;border-radius:50%;border:1px solid #222"></div>
<div class="a" style="left:1264.3px;top:191.2px;width:18.799999999999997px;height:6.800px;background:#2a2a2a;border-radius:2px;color:#fff;font-size:6.500px;line-height:6.800px;text-align:center;font-weight:bold;letter-spacing:.3px">175</div>
<div class="a" style="left:1334.700px;top:93.800px;width:94px;height:94px;background:linear-gradient(to bottom,rgba(48,48,48,0),rgba(48,48,48,1)),linear-gradient(to right,#fff,#3df5e5)"></div>
<div class="a" style="left:1352.800px;top:104.300px;width:5px;height:5px;border:1px solid #222"></div>
<div class="a" style="left:1432.6000000000001px;top:104.19999999999999px;width:13.2px;height:6.800px;background:#2a2a2a;border-radius:2px;color:#fff;font-size:6.500px;line-height:6.800px;text-align:center;font-weight:bold;letter-spacing:.3px">88</div>
<svg class="a" style="left:1428.500px;top:104.600px" width="6" height="6" viewBox="0 0 6 6"><path d="M1 3l3.500-2.300v4.600z" fill="#222"/></svg>
<div class="a" style="left:1349.1000000000001px;top:191.2px;width:13.2px;height:6.800px;background:#2a2a2a;border-radius:2px;color:#fff;font-size:6.500px;line-height:6.800px;text-align:center;font-weight:bold;letter-spacing:.3px">21</div>
<svg class="a" style="left:1352.700px;top:187.600px" width="6" height="5" viewBox="0 0 6 5"><path d="M3 .5l2.300 3.500h-4.600z" fill="#222"/></svg>
<div class="hl" style="left:1222.700px;top:234.600px;width:224.500px;height:1.300px"></div>
<div class="hl" style="left:1222.700px;top:253.500px;width:224.500px"></div>
<div class="tab jp" style="left:1222.700px;top:238.400px;width:39px;height:15.800px;line-height:13.500px;font-size:8px">カラー</div>
<div class="a" style="left:1224px;top:257.200px;width:14px;height:6.600px;background:#ececec;border:.5px solid #aaa;color:#222;font-size:6px;line-height:5.800px;text-align:center;letter-spacing:0;border-radius:1px">RGB</div>
<div class="a" style="left:1238px;top:257.200px;width:14.6px;height:6.600px;background:#ececec;border:.5px solid #aaa;color:#222;font-size:6px;line-height:5.800px;text-align:center;letter-spacing:0;border-radius:1px">HSB</div>
<div class="a" style="left:1252.6px;top:257.200px;width:15.3px;height:6.600px;background:#333;border:.5px solid #aaa;color:#fff;font-size:6px;line-height:5.800px;text-align:center;letter-spacing:0;border-radius:1px">CMY</div>
<div class="a" style="left:1240.400px;top:280.200px;width:24.600px;height:25.100px;background:#b2e0dc;border:1px solid #c0c0c0;border-radius:3px"></div>
<div class="a" style="left:1226.200px;top:266.800px;width:25.600px;height:25px;background:#b2e0dc;border:1.400px solid #111;border-radius:3.500px"></div>
<div class="a" style="left:1228px;top:294.500px;width:9px;height:8.500px;background:#b2e0dc;border:1px solid #555"></div>
<svg class="a" style="left:1253px;top:267.500px" width="11" height="11" viewBox="0 0 11 11"><path d="M2.200 3.200c2-.6 4 .2 4.800 2.600" fill="none" stroke="#111" stroke-width="1.300"/><path d="M.8 3.200l3-2.200v4z" fill="#111"/><path d="M5.200 7.200h4.200l-2.100 3z" fill="#111"/></svg>
<div class="t" style="left:1272.500px;top:258.7px;font-size:8.400px">C</div>
<div class="a" style="left:1283.300px;top:259.9px;width:120.700px;height:3px;background:linear-gradient(to right,#f3dcd8,#9fe8e4 45%,#22dede);border-radius:1px"></div>
<svg class="a" style="left:1316.4px;top:263.7px" width="7" height="6" viewBox="0 0 7 6"><path d="M3.500 .3l3 5.200h-6z" fill="#111"/></svg>
<div class="a" style="left:1409.9px;top:258.7px;width:35.8px;height:12.6px;background:#fff;border:1px solid #d2d2d2;border-radius:2px"></div><div class="a" style="left:1433.1000000000001px;top:259.7px;width:1px;height:10.6px;background:#dadada"></div><div class="t" style="left:1409.9px;top:259.8px;width:20.7px;text-align:right;color:#111;font-size:8.2px">77</div><svg class="a" style="left:1435.4px;top:260.0px" width="8" height="10" viewBox="0 0 8 10"><path d="M1.300 3.900l2.700-2.500 2.700 2.500M1.300 6.100l2.700 2.500 2.700-2.500" fill="none" stroke="#777" stroke-width="0.75"/></svg>
<div class="t" style="left:1272.500px;top:275.40000000000003px;font-size:8.400px">M</div>
<div class="a" style="left:1283.300px;top:276.3px;width:120.700px;height:3px;background:linear-gradient(to right,#9ef2d2,#a7b6e8 40%,#c02ae0 80%,#b400d8);border-radius:1px"></div>
<svg class="a" style="left:1295.1px;top:280.1px" width="7" height="6" viewBox="0 0 7 6"><path d="M3.500 .3l3 5.200h-6z" fill="#111"/></svg>
<div class="a" style="left:1409.9px;top:275.1px;width:35.8px;height:12.6px;background:#fff;border:1px solid #d2d2d2;border-radius:2px"></div><div class="a" style="left:1433.1000000000001px;top:276.1px;width:1px;height:10.6px;background:#dadada"></div><div class="t" style="left:1409.9px;top:276.20000000000005px;width:20.7px;text-align:right;color:#111;font-size:8.2px">31</div><svg class="a" style="left:1435.4px;top:276.40000000000003px" width="8" height="10" viewBox="0 0 8 10"><path d="M1.300 3.900l2.700-2.500 2.700 2.500M1.300 6.100l2.700 2.500 2.700-2.500" fill="none" stroke="#777" stroke-width="0.75"/></svg>
<div class="t" style="left:1272.500px;top:291.8px;font-size:8.400px">Y</div>
<div class="a" style="left:1283.300px;top:293.0px;width:120.700px;height:3px;background:linear-gradient(to right,#b4dcf2,#b2dc9a 50%,#aedb2c);border-radius:1px"></div>
<svg class="a" style="left:1297.0px;top:296.8px" width="7" height="6" viewBox="0 0 7 6"><path d="M3.500 .3l3 5.200h-6z" fill="#111"/></svg>
<div class="a" style="left:1409.9px;top:291.8px;width:35.8px;height:12.6px;background:#fff;border:1px solid #d2d2d2;border-radius:2px"></div><div class="a" style="left:1433.1000000000001px;top:292.8px;width:1px;height:10.6px;background:#dadada"></div><div class="t" style="left:1409.9px;top:292.90000000000003px;width:20.7px;text-align:right;color:#111;font-size:8.2px">35</div><svg class="a" style="left:1435.4px;top:293.1px" width="8" height="10" viewBox="0 0 8 10"><path d="M1.300 3.900l2.700-2.500 2.700 2.500M1.300 6.100l2.700 2.500 2.700-2.500" fill="none" stroke="#777" stroke-width="0.75"/></svg>
<div class="a" style="left:1224px;top:310.700px;width:12.400px;height:9.300px;background:#333;color:#fff;font-size:8px;line-height:9.300px;text-align:center">1</div>
<div class="a" style="left:1240.200px;top:310.700px;width:206.800px;height:9.300px;background:linear-gradient(to bottom,rgba(0,0,0,0) 10%,rgba(0,0,0,1) 95%),linear-gradient(to right,#f00,#ff0 17%,#0f0 33%,#0ff 50%,#00f 67%,#f0f 83%,#f00)"></div>
<div class="a" style="left:1440.200px;top:310.700px;width:6.800px;height:4.600px;background:#fff"></div><div class="a" style="left:1440.200px;top:315.300px;width:6.800px;height:4.700px;background:#000"></div>
<div class="a" style="left:1224px;top:324.100px;width:223px;height:78px;background:#333"></div>
<div class="a" style="left:1224.800px;top:325.200px;width:24.800px;height:24.500px;background:#b2e0dc;border:1px solid #f4f4f4;border-radius:3px"></div>
<div class="t" style="left:1227px;top:325.300px;font-size:7.500px;color:#111">1</div>
<svg class="a" style="left:0;top:403.5px" width="1450" height="12" viewBox="0 403.5 1450 12"><path d="M1227.0 409.5h6.400M1230.2 406.3v6.400" stroke="#222" stroke-width="1.100"/><path d="M1240.5 409.5h6.400" stroke="#222" stroke-width="1.100"/><path d="M1254.3 409.8l1.800 2.200 3.600-5.200" stroke="#222" stroke-width=".9" fill="none"/><path d="M1271.8999999999999 406.2l2 2-4.300 4.300-2.600.6.600-2.600z" fill="#222"/><path d="M1282.5 409.5h3" stroke="#222" stroke-width="1.200"/><path d="M1282.7 407.2v4.600l-2.500-2.300zM1285.3 407.2v4.600l2.500-2.300z" fill="#222"/><circle cx="1297.3" cy="409.5" r="2.600" fill="none" stroke="#222" stroke-width="1.200"/><path d="M1295.5 407.7l3.600 3.600" stroke="#222" stroke-width="1.100"/><path d="M1333.6 409.5h6.800M1337 406.1v6.800M1334.6 407.1l4.800 4.800M1334.6 411.9l4.800-4.800" stroke="#222" stroke-width=".8"/><circle cx="1337" cy="409.5" r="1" fill="#f1f1f1"/><path d="M1347.5 408.1h6l-3 3.200z" fill="#222"/></svg>
<div class="t jp" style="left:1306.400px;top:403.300px;font-size:7.600px;letter-spacing:0">クリア</div>
<div class="hl" style="left:1222.700px;top:417.800px;width:224.500px;height:1.300px"></div>
<div class="hl" style="left:1222.700px;top:437px;width:224.500px"></div>
<div class="tab jp" style="left:1222.700px;top:421.600px;width:31px;height:16px;line-height:13.500px;font-size:8px">配色</div>
<div class="a" style="left:1224px;top:440.300px;width:223px;height:361px;background:#333"></div>
<div class="a" style="left:1224.800px;top:441.700px;width:221.400px;height:22.400px;border:1px solid #f4f4f4;border-radius:3px;background:#2b2b2b"></div>
<div class="pi" style="top:443.4px;background:#b2e0dc"></div>
<div class="pl" style="top:452.9px;font-size:8.300px">1: <span class="jp" style="font-size:8px">配色</span>1</div>
<div class="pi" style="top:467.9px;background:#d6dca2"></div>
<div class="pl" style="top:477.4px;font-size:8.300px">2: <span class="jp" style="font-size:8px">配色</span>2</div>
<div class="pi" style="top:492.5px;background:#f88a52"></div>
<div class="pl" style="top:502.0px;font-size:8.300px">3: <span class="jp" style="font-size:8px">配色</span>3</div>
<div class="pi" style="top:517.0px;background:#f15252"></div>
<div class="pl" style="top:526.5px;font-size:8.300px">4: <span class="jp" style="font-size:8px">配色</span>4</div>
<div class="pi" style="top:541.5px;background:#dcdcd4"></div>
<div class="pl" style="top:551.0px;font-size:8.300px">5: <span class="jp" style="font-size:8px">配色</span>5</div>
<div class="pi" style="top:566.0px;background:#ffffff"></div>
<div class="pl" style="top:575.5px;font-size:8.300px">6: <span class="jp" style="font-size:8px">配色</span>6</div>
<div class="pi" style="top:590.6px;background:#6db9bd"></div>
<div class="pl" style="top:600.1px;font-size:8.300px">7: <span class="jp" style="font-size:8px">配色</span>7</div>
<svg class="a" style="left:0;top:803.4px" width="1450" height="12" viewBox="0 803.4 1450 12"><path d="M1228.2 809.4h6.400M1231.4 806.1999999999999v6.400" stroke="#222" stroke-width="1.100"/><path d="M1241.8 809.4h6.400" stroke="#222" stroke-width="1.100"/><path d="M1258 812.4v-5.500" stroke="#222" stroke-width=".9"/><path d="M1256.4 808.1h3.200l-1.600-2.200z" fill="#222"/><path d="M1271.8 806.4v5.500" stroke="#222" stroke-width=".9"/><path d="M1270.2 810.6999999999999h3.200l-1.600 2.200z" fill="#222"/><path d="M1282.4 808.0h6l-3 3.200z" fill="#222"/></svg>
<!--CORNERS--><div class="a" style="left:0;top:0;width:6px;height:6px;background:radial-gradient(circle at 100% 100%,rgba(255,255,255,0) 5.400px,#fff 6px)"></div><div class="a" style="left:1444px;top:0;width:6px;height:6px;background:radial-gradient(circle at 0 100%,rgba(255,255,255,0) 5.400px,#fff 6px)"></div><div class="a" style="left:0;top:811px;width:6px;height:6px;background:radial-gradient(circle at 100% 0,rgba(255,255,255,0) 5.400px,#fff 6px)"></div><div class="a" style="left:1444px;top:811px;width:6px;height:6px;background:radial-gradient(circle at 0 0,rgba(255,255,255,0) 5.400px,#fff 6px)"></div>
</div></body></html>
